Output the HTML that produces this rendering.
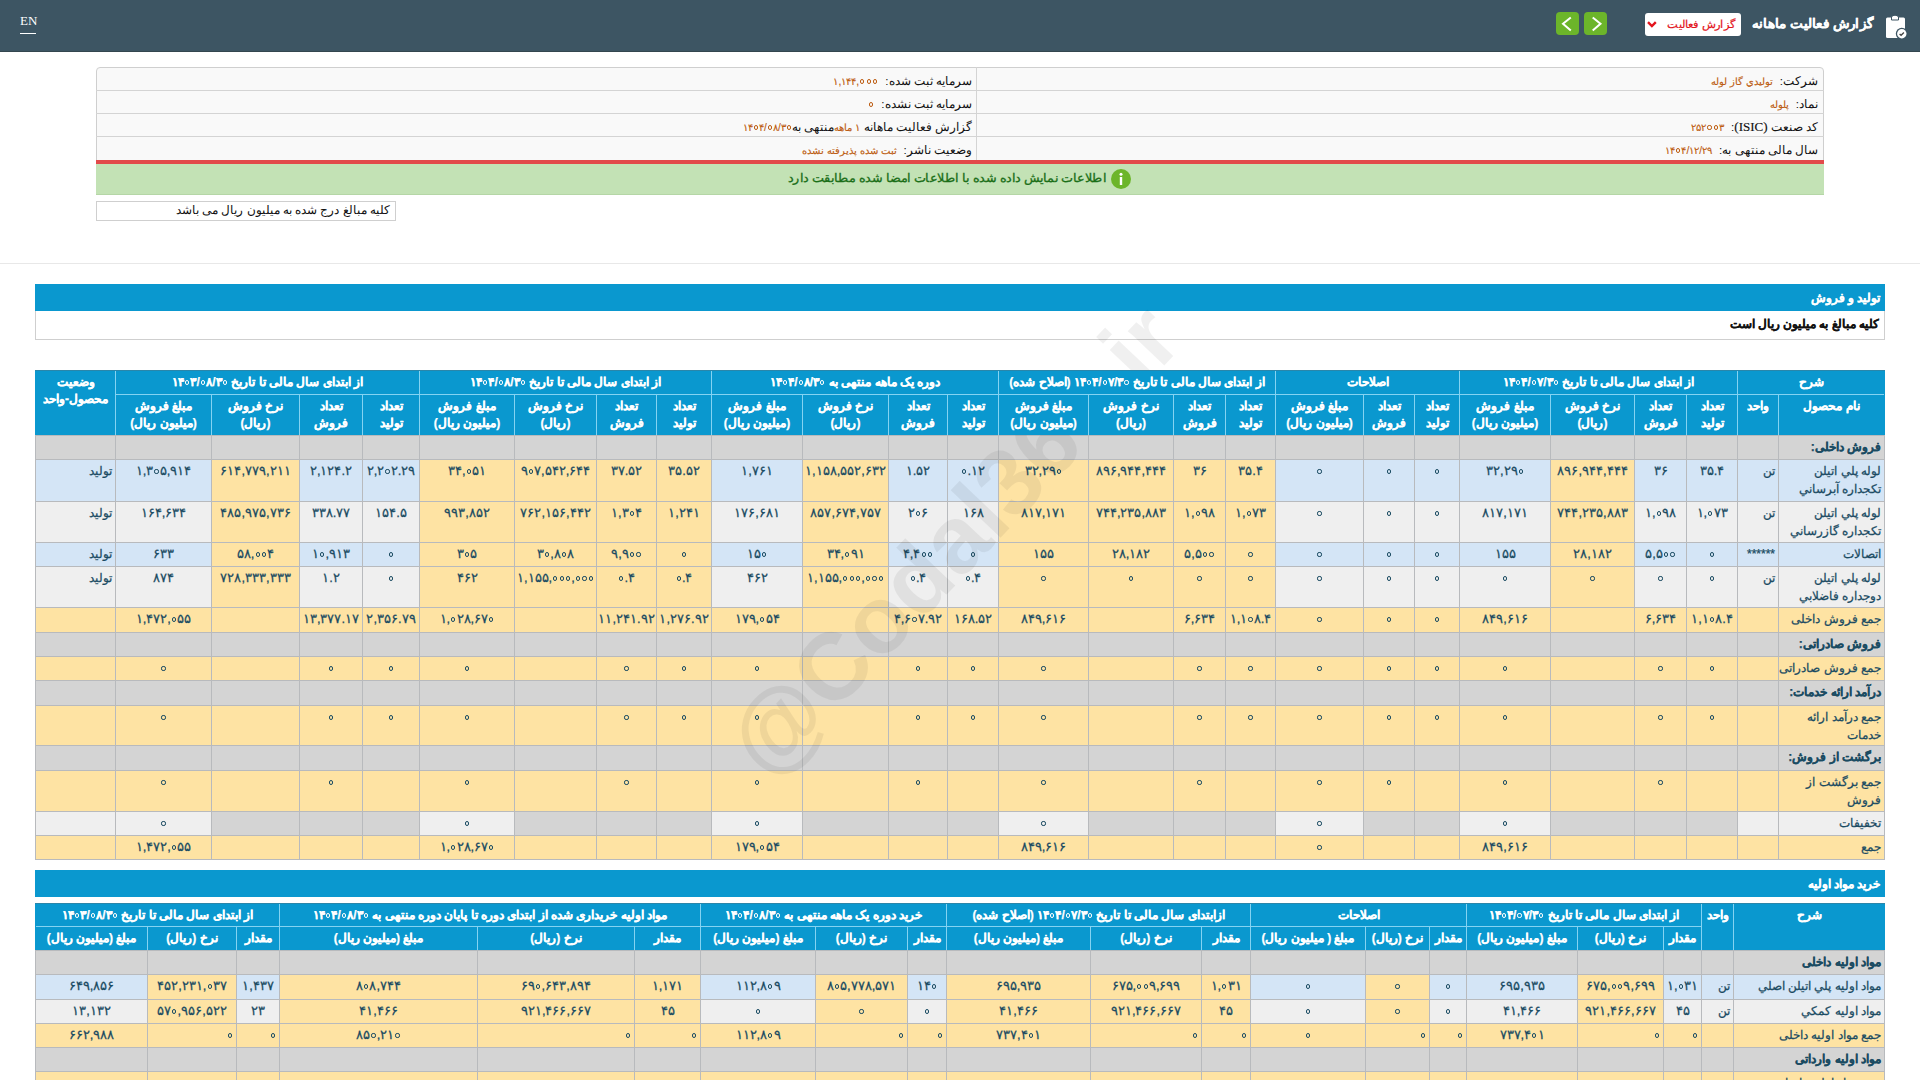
<!DOCTYPE html>
<html lang="fa"><head><meta charset="utf-8">
<style>
html,body{margin:0;padding:0;}
body{width:1920px;height:1080px;overflow:hidden;position:relative;background:#fff;font-family:"Liberation Sans",sans-serif;direction:rtl;}
div{box-sizing:border-box;}
.c{position:absolute;overflow:hidden;}
.c>div{-webkit-text-stroke:0.25px currentColor;}
.a span{-webkit-text-stroke:0.15px currentColor;}
.a{position:absolute;}
.n{direction:ltr;unicode-bidi:isolate;}
.z{display:inline-block;width:4.2px;height:4.2px;border:1.5px solid currentColor;border-radius:50%;vertical-align:1.4px;margin:0 1.1px;box-sizing:border-box;}
</style></head><body>

<div class="a" style="left:0;top:0;width:1920px;height:52px;background:#3d5563;border-bottom:1px solid #34464f;"></div>
<div class="a" style="left:20px;top:13px;font-family:'Liberation Serif',serif;font-size:13px;color:#fff;direction:ltr;line-height:16px;">EN</div>
<div class="a" style="left:20px;top:33px;width:16px;height:1px;background:#fff;"></div>
<svg class="a" style="left:1876px;top:8px;" width="40" height="36" viewBox="0 0 40 36">
  <rect x="10" y="9.5" width="19" height="20.5" rx="1.5" fill="#fff"/>
  <path d="M15.5 12 V9 a4 3.5 0 0 1 7 0 V12 Z" fill="#fff" stroke="#3d5563" stroke-width="1"/>
  <circle cx="25.8" cy="25.7" r="6" fill="#3d5563"/>
  <circle cx="25.8" cy="25.7" r="4.7" fill="#fff"/>
  <path d="M23.6 25.9 l1.5 1.4 l2.8 -2.8" fill="none" stroke="#444" stroke-width="1.3"/>
</svg>
<div class="a" style="right:47px;top:14px;font-size:13px;font-weight:bold;color:#fff;-webkit-text-stroke:0.2px #fff;transform:scaleX(1.043);transform-origin:right center;line-height:20px;white-space:nowrap;">گزارش فعالیت ماهانه</div>
<div class="a" style="left:1645px;top:13px;width:96px;height:23px;background:#fff;border-radius:3px;"></div>
<div class="a" style="right:185px;top:15px;font-size:11px;color:#e3141c;-webkit-text-stroke:0.2px #e3141c;transform:scaleX(1.045);transform-origin:right center;line-height:18px;white-space:nowrap;">گزارش فعالیت</div>
<svg class="a" style="left:1645px;top:13px;" width="20" height="23" viewBox="0 0 20 23"><path d="M3 9.2 L6.9 13 L10.8 9.2" fill="none" stroke="#e3141c" stroke-width="2.4"/></svg>
<div class="a" style="left:1556px;top:12px;width:23px;height:23px;background:#6cb52a;border-radius:4px;"></div>
<div class="a" style="left:1584px;top:12px;width:23px;height:23px;background:#6cb52a;border-radius:4px;"></div>
<svg class="a" style="left:1556px;top:12px;" width="52" height="23" viewBox="0 0 52 23"><path d="M14.8 5.5 L7 11.7 L14.8 18.5" fill="none" stroke="#fff" stroke-width="2"/><path d="M36.7 5.5 L44.5 11.7 L36.7 18.5" fill="none" stroke="#fff" stroke-width="2"/></svg>

<div class="a" style="left:96px;top:67px;width:1728px;height:94px;background:#f9f9f9;border:1px solid #cfcfcf;border-radius:4px 4px 0 0;"></div>
<div class="a" style="left:96px;top:90px;width:1728px;height:1px;background:#d4d4d4;"></div>
<div class="a" style="left:96px;top:113px;width:1728px;height:1px;background:#d4d4d4;"></div>
<div class="a" style="left:96px;top:136px;width:1728px;height:1px;background:#d4d4d4;"></div>
<div class="a" style="left:976px;top:67px;width:1px;height:94px;background:#d4d4d4;"></div>
<div class="a" style="left:96px;top:160px;width:1728px;height:4px;background:#e24a4a;"></div>
<div class="a" style="left:96px;top:164px;width:1728px;height:31px;background:#c3e2b5;border-bottom:1px solid #b5d6a6;"></div>
<svg class="a" style="left:1110px;top:168px;" width="22" height="22" viewBox="0 0 22 22"><circle cx="11" cy="11" r="10" fill="#6cb52a"/><circle cx="11" cy="6.2" r="1.5" fill="#fff"/><rect x="9.8" y="9" width="2.4" height="8" fill="#fff"/></svg>
<div class="a" style="right:814px;top:169px;font-size:12px;transform:scaleX(1.064);transform-origin:right center;font-weight:normal;-webkit-text-stroke:0.3px #1a6e17;color:#1a6e17;line-height:18px;white-space:nowrap;">اطلاعات نمایش داده شده با اطلاعات امضا شده مطابقت دارد</div>
<div class="a" style="left:96px;top:201px;width:300px;height:20px;background:#fff;border:1px solid #cfcfcf;"></div>
<div class="a" style="right:1530px;top:202px;font-size:11.8px;color:#111;line-height:17px;white-space:nowrap;">کلیه مبالغ درج شده به میلیون ریال می باشد</div>
<div class="a" style="left:0;top:263px;width:1920px;height:1px;background:#e8e8e8;"></div>

<div class="a" style="left:35px;top:284px;width:1850px;height:27px;background:#0a98cf;"></div>
<div class="a" style="right:40px;top:289px;font-size:11.6px;font-weight:bold;color:#fff;-webkit-text-stroke:0.25px #fff;line-height:17px;white-space:nowrap;">تولید و فروش</div>
<div class="a" style="left:35px;top:311px;width:1850px;height:29px;background:#fff;border:1px solid #cfcfcf;border-top:0;"></div>
<div class="a" style="right:41px;top:316px;font-size:11.8px;font-weight:bold;color:#111;-webkit-text-stroke:0.2px #111;line-height:17px;white-space:nowrap;">کلیه مبالغ به میلیون ریال است</div>

<div class="a" style="left:35px;top:870px;width:1850px;height:27px;background:#0a98cf;"></div>
<div class="a" style="right:40px;top:875px;font-size:11.6px;font-weight:bold;color:#fff;-webkit-text-stroke:0.25px #fff;line-height:17px;white-space:nowrap;">خرید مواد اولیه</div>
<div class="a" style="right:102px;top:72px;font-size:11.6px;color:#111;line-height:17px;white-space:nowrap;">شرکت:<span style="color:#bd5d12;margin-right:7px;font-size:10.3px">توليدي گاز لوله</span></div>
<div class="a" style="right:102px;top:95px;font-size:11.6px;color:#111;line-height:17px;white-space:nowrap;">نماد:<span style="color:#bd5d12;margin-right:7px;font-size:10.3px">پلوله</span></div>
<div class="a" style="right:102px;top:118px;font-size:11.6px;color:#111;line-height:17px;white-space:nowrap;">کد صنعت <span style="font-family:Liberation Serif,serif;font-size:13px">(ISIC)</span>:<span style="color:#bd5d12;margin-right:7px;font-size:10.3px"><span class="n">۲۵۲<i class="z"></i><i class="z"></i>۳</span></span></div>
<div class="a" style="right:102px;top:141px;font-size:11.6px;color:#111;line-height:17px;white-space:nowrap;">سال مالی منتهی به:<span style="color:#bd5d12;margin-right:7px;font-size:10.3px"><span class="n">۱۴<i class="z"></i>۴/۱۲/۲۹</span></span></div>
<div class="a" style="right:948px;top:72px;font-size:11.6px;color:#111;line-height:17px;white-space:nowrap;">سرمایه ثبت شده:<span style="color:#bd5d12;margin-right:7px;font-size:10.3px"><span class="n">۱,۱۴۴,<i class="z"></i><i class="z"></i><i class="z"></i></span></span></div>
<div class="a" style="right:948px;top:95px;font-size:11.6px;color:#111;line-height:17px;white-space:nowrap;">سرمایه ثبت نشده:<span style="color:#bd5d12;margin-right:7px;font-size:10.3px"><span class="n"><i class="z"></i></span></span></div>
<div class="a" style="right:948px;top:118px;font-size:11.6px;color:#111;line-height:17px;white-space:nowrap;">گزارش فعالیت ماهانه <span style="color:#bd5d12;font-size:10.3px"><span class="n">۱</span> ماهه</span>&zwnj;منتهی به<span style="color:#bd5d12;font-size:10px"><span class="n">۱۴<i class="z"></i>۴/<i class="z"></i>۸/۳<i class="z"></i></span></span></div>
<div class="a" style="right:948px;top:141px;font-size:11.6px;color:#111;line-height:17px;white-space:nowrap;">وضعیت ناشر:<span style="color:#bd5d12;margin-right:7px;font-size:10.3px">ثبت شده پذیرفته نشده</span></div>
<div class="c" style="left:1778px;top:435px;width:107px;height:25px;background:#d4d4d4;border:1px solid #b8babd;"><div style="padding:2px 3px 0 3px;text-align:right;line-height:18px;font-size:12px;color:#1a4b62;font-weight:bold;white-space:nowrap;padding-left:0;">فروش داخلی:</div></div>
<div class="c" style="left:1737px;top:435px;width:42px;height:25px;background:#d4d4d4;border:1px solid #b8babd;"></div>
<div class="c" style="left:1686px;top:435px;width:52px;height:25px;background:#d4d4d4;border:1px solid #b8babd;"></div>
<div class="c" style="left:1634px;top:435px;width:53px;height:25px;background:#d4d4d4;border:1px solid #b8babd;"></div>
<div class="c" style="left:1550px;top:435px;width:85px;height:25px;background:#d4d4d4;border:1px solid #b8babd;"></div>
<div class="c" style="left:1459px;top:435px;width:92px;height:25px;background:#d4d4d4;border:1px solid #b8babd;"></div>
<div class="c" style="left:1414px;top:435px;width:46px;height:25px;background:#d4d4d4;border:1px solid #b8babd;"></div>
<div class="c" style="left:1363px;top:435px;width:52px;height:25px;background:#d4d4d4;border:1px solid #b8babd;"></div>
<div class="c" style="left:1275px;top:435px;width:89px;height:25px;background:#d4d4d4;border:1px solid #b8babd;"></div>
<div class="c" style="left:1225px;top:435px;width:51px;height:25px;background:#d4d4d4;border:1px solid #b8babd;"></div>
<div class="c" style="left:1173px;top:435px;width:53px;height:25px;background:#d4d4d4;border:1px solid #b8babd;"></div>
<div class="c" style="left:1088px;top:435px;width:86px;height:25px;background:#d4d4d4;border:1px solid #b8babd;"></div>
<div class="c" style="left:998px;top:435px;width:91px;height:25px;background:#d4d4d4;border:1px solid #b8babd;"></div>
<div class="c" style="left:947px;top:435px;width:52px;height:25px;background:#d4d4d4;border:1px solid #b8babd;"></div>
<div class="c" style="left:888px;top:435px;width:60px;height:25px;background:#d4d4d4;border:1px solid #b8babd;"></div>
<div class="c" style="left:802px;top:435px;width:87px;height:25px;background:#d4d4d4;border:1px solid #b8babd;"></div>
<div class="c" style="left:711px;top:435px;width:92px;height:25px;background:#d4d4d4;border:1px solid #b8babd;"></div>
<div class="c" style="left:656px;top:435px;width:56px;height:25px;background:#d4d4d4;border:1px solid #b8babd;"></div>
<div class="c" style="left:596px;top:435px;width:61px;height:25px;background:#d4d4d4;border:1px solid #b8babd;"></div>
<div class="c" style="left:514px;top:435px;width:83px;height:25px;background:#d4d4d4;border:1px solid #b8babd;"></div>
<div class="c" style="left:419px;top:435px;width:96px;height:25px;background:#d4d4d4;border:1px solid #b8babd;"></div>
<div class="c" style="left:362px;top:435px;width:58px;height:25px;background:#d4d4d4;border:1px solid #b8babd;"></div>
<div class="c" style="left:299px;top:435px;width:64px;height:25px;background:#d4d4d4;border:1px solid #b8babd;"></div>
<div class="c" style="left:211px;top:435px;width:89px;height:25px;background:#d4d4d4;border:1px solid #b8babd;"></div>
<div class="c" style="left:115px;top:435px;width:97px;height:25px;background:#d4d4d4;border:1px solid #b8babd;"></div>
<div class="c" style="left:35px;top:435px;width:81px;height:25px;background:#d4d4d4;border:1px solid #b8babd;"></div>
<div class="c" style="left:1778px;top:459px;width:107px;height:43px;background:#d4e5f6;border:1px solid #b8babd;"><div style="padding:2px 3px 0 3px;text-align:right;line-height:18px;font-size:12px;color:#1a4b62;white-space:nowrap;padding-left:0;">لوله پلي اتيلن<br>تکجداره آبرساني</div></div>
<div class="c" style="left:1737px;top:459px;width:42px;height:43px;background:#d4e5f6;border:1px solid #b8babd;"><div style="padding:2px 3px 0 3px;text-align:right;line-height:18px;font-size:12px;color:#1a4b62;white-space:nowrap;padding-left:0;">تن</div></div>
<div class="c" style="left:1686px;top:459px;width:52px;height:43px;background:#d4e5f6;border:1px solid #b8babd;"><div style="padding:2px 0px 0 0px;text-align:center;line-height:18px;font-size:13px;color:#1a4b62;white-space:nowrap;"><span class="n">۳۵.۴</span></div></div>
<div class="c" style="left:1634px;top:459px;width:53px;height:43px;background:#d4e5f6;border:1px solid #b8babd;"><div style="padding:2px 0px 0 0px;text-align:center;line-height:18px;font-size:13px;color:#1a4b62;white-space:nowrap;"><span class="n">۳۶</span></div></div>
<div class="c" style="left:1550px;top:459px;width:85px;height:43px;background:#fee3a3;border:1px solid #b8babd;"><div style="padding:2px 0px 0 0px;text-align:center;line-height:18px;font-size:13px;color:#1a4b62;white-space:nowrap;"><span class="n">۸۹۶,۹۴۴,۴۴۴</span></div></div>
<div class="c" style="left:1459px;top:459px;width:92px;height:43px;background:#d4e5f6;border:1px solid #b8babd;"><div style="padding:2px 0px 0 0px;text-align:center;line-height:18px;font-size:13px;color:#1a4b62;white-space:nowrap;"><span class="n">۳۲,۲۹<i class="z"></i></span></div></div>
<div class="c" style="left:1414px;top:459px;width:46px;height:43px;background:#d4e5f6;border:1px solid #b8babd;"><div style="padding:2px 0px 0 0px;text-align:center;line-height:18px;font-size:13px;color:#1a4b62;white-space:nowrap;"><span class="n"><i class="z"></i></span></div></div>
<div class="c" style="left:1363px;top:459px;width:52px;height:43px;background:#d4e5f6;border:1px solid #b8babd;"><div style="padding:2px 0px 0 0px;text-align:center;line-height:18px;font-size:13px;color:#1a4b62;white-space:nowrap;"><span class="n"><i class="z"></i></span></div></div>
<div class="c" style="left:1275px;top:459px;width:89px;height:43px;background:#d4e5f6;border:1px solid #b8babd;"><div style="padding:2px 0px 0 0px;text-align:center;line-height:18px;font-size:13px;color:#1a4b62;white-space:nowrap;"><span class="n"><i class="z"></i></span></div></div>
<div class="c" style="left:1225px;top:459px;width:51px;height:43px;background:#fee3a3;border:1px solid #b8babd;"><div style="padding:2px 0px 0 0px;text-align:center;line-height:18px;font-size:13px;color:#1a4b62;white-space:nowrap;"><span class="n">۳۵.۴</span></div></div>
<div class="c" style="left:1173px;top:459px;width:53px;height:43px;background:#fee3a3;border:1px solid #b8babd;"><div style="padding:2px 0px 0 0px;text-align:center;line-height:18px;font-size:13px;color:#1a4b62;white-space:nowrap;"><span class="n">۳۶</span></div></div>
<div class="c" style="left:1088px;top:459px;width:86px;height:43px;background:#fee3a3;border:1px solid #b8babd;"><div style="padding:2px 0px 0 0px;text-align:center;line-height:18px;font-size:13px;color:#1a4b62;white-space:nowrap;"><span class="n">۸۹۶,۹۴۴,۴۴۴</span></div></div>
<div class="c" style="left:998px;top:459px;width:91px;height:43px;background:#fee3a3;border:1px solid #b8babd;"><div style="padding:2px 0px 0 0px;text-align:center;line-height:18px;font-size:13px;color:#1a4b62;white-space:nowrap;"><span class="n">۳۲,۲۹<i class="z"></i></span></div></div>
<div class="c" style="left:947px;top:459px;width:52px;height:43px;background:#d4e5f6;border:1px solid #b8babd;"><div style="padding:2px 0px 0 0px;text-align:center;line-height:18px;font-size:13px;color:#1a4b62;white-space:nowrap;"><span class="n"><i class="z"></i>.۱۲</span></div></div>
<div class="c" style="left:888px;top:459px;width:60px;height:43px;background:#d4e5f6;border:1px solid #b8babd;"><div style="padding:2px 0px 0 0px;text-align:center;line-height:18px;font-size:13px;color:#1a4b62;white-space:nowrap;"><span class="n">۱.۵۲</span></div></div>
<div class="c" style="left:802px;top:459px;width:87px;height:43px;background:#fee3a3;border:1px solid #b8babd;"><div style="padding:2px 0px 0 0px;text-align:center;line-height:18px;font-size:13px;color:#1a4b62;white-space:nowrap;"><span class="n">۱,۱۵۸,۵۵۲,۶۳۲</span></div></div>
<div class="c" style="left:711px;top:459px;width:92px;height:43px;background:#d4e5f6;border:1px solid #b8babd;"><div style="padding:2px 0px 0 0px;text-align:center;line-height:18px;font-size:13px;color:#1a4b62;white-space:nowrap;"><span class="n">۱,۷۶۱</span></div></div>
<div class="c" style="left:656px;top:459px;width:56px;height:43px;background:#fee3a3;border:1px solid #b8babd;"><div style="padding:2px 0px 0 0px;text-align:center;line-height:18px;font-size:13px;color:#1a4b62;white-space:nowrap;"><span class="n">۳۵.۵۲</span></div></div>
<div class="c" style="left:596px;top:459px;width:61px;height:43px;background:#fee3a3;border:1px solid #b8babd;"><div style="padding:2px 0px 0 0px;text-align:center;line-height:18px;font-size:13px;color:#1a4b62;white-space:nowrap;"><span class="n">۳۷.۵۲</span></div></div>
<div class="c" style="left:514px;top:459px;width:83px;height:43px;background:#fee3a3;border:1px solid #b8babd;"><div style="padding:2px 0px 0 0px;text-align:center;line-height:18px;font-size:13px;color:#1a4b62;white-space:nowrap;"><span class="n">۹<i class="z"></i>۷,۵۴۲,۶۴۴</span></div></div>
<div class="c" style="left:419px;top:459px;width:96px;height:43px;background:#fee3a3;border:1px solid #b8babd;"><div style="padding:2px 0px 0 0px;text-align:center;line-height:18px;font-size:13px;color:#1a4b62;white-space:nowrap;"><span class="n">۳۴,<i class="z"></i>۵۱</span></div></div>
<div class="c" style="left:362px;top:459px;width:58px;height:43px;background:#d4e5f6;border:1px solid #b8babd;"><div style="padding:2px 0px 0 0px;text-align:center;line-height:18px;font-size:13px;color:#1a4b62;white-space:nowrap;"><span class="n">۲,۲<i class="z"></i>۲.۲۹</span></div></div>
<div class="c" style="left:299px;top:459px;width:64px;height:43px;background:#d4e5f6;border:1px solid #b8babd;"><div style="padding:2px 0px 0 0px;text-align:center;line-height:18px;font-size:13px;color:#1a4b62;white-space:nowrap;"><span class="n">۲,۱۲۴.۲</span></div></div>
<div class="c" style="left:211px;top:459px;width:89px;height:43px;background:#fee3a3;border:1px solid #b8babd;"><div style="padding:2px 0px 0 0px;text-align:center;line-height:18px;font-size:13px;color:#1a4b62;white-space:nowrap;"><span class="n">۶۱۴,۷۷۹,۲۱۱</span></div></div>
<div class="c" style="left:115px;top:459px;width:97px;height:43px;background:#d4e5f6;border:1px solid #b8babd;"><div style="padding:2px 0px 0 0px;text-align:center;line-height:18px;font-size:13px;color:#1a4b62;white-space:nowrap;"><span class="n">۱,۳<i class="z"></i>۵,۹۱۴</span></div></div>
<div class="c" style="left:35px;top:459px;width:81px;height:43px;background:#d4e5f6;border:1px solid #b8babd;"><div style="padding:2px 3px 0 3px;text-align:right;line-height:18px;font-size:12px;color:#1a4b62;white-space:nowrap;padding-left:0;">تولید</div></div>
<div class="c" style="left:1778px;top:501px;width:107px;height:42px;background:#efefef;border:1px solid #b8babd;"><div style="padding:2px 3px 0 3px;text-align:right;line-height:18px;font-size:12px;color:#1a4b62;white-space:nowrap;padding-left:0;">لوله پلي اتيلن<br>تکجداره گازرساني</div></div>
<div class="c" style="left:1737px;top:501px;width:42px;height:42px;background:#efefef;border:1px solid #b8babd;"><div style="padding:2px 3px 0 3px;text-align:right;line-height:18px;font-size:12px;color:#1a4b62;white-space:nowrap;padding-left:0;">تن</div></div>
<div class="c" style="left:1686px;top:501px;width:52px;height:42px;background:#efefef;border:1px solid #b8babd;"><div style="padding:2px 0px 0 0px;text-align:center;line-height:18px;font-size:13px;color:#1a4b62;white-space:nowrap;"><span class="n">۱,<i class="z"></i>۷۳</span></div></div>
<div class="c" style="left:1634px;top:501px;width:53px;height:42px;background:#efefef;border:1px solid #b8babd;"><div style="padding:2px 0px 0 0px;text-align:center;line-height:18px;font-size:13px;color:#1a4b62;white-space:nowrap;"><span class="n">۱,<i class="z"></i>۹۸</span></div></div>
<div class="c" style="left:1550px;top:501px;width:85px;height:42px;background:#fee3a3;border:1px solid #b8babd;"><div style="padding:2px 0px 0 0px;text-align:center;line-height:18px;font-size:13px;color:#1a4b62;white-space:nowrap;"><span class="n">۷۴۴,۲۳۵,۸۸۳</span></div></div>
<div class="c" style="left:1459px;top:501px;width:92px;height:42px;background:#efefef;border:1px solid #b8babd;"><div style="padding:2px 0px 0 0px;text-align:center;line-height:18px;font-size:13px;color:#1a4b62;white-space:nowrap;"><span class="n">۸۱۷,۱۷۱</span></div></div>
<div class="c" style="left:1414px;top:501px;width:46px;height:42px;background:#efefef;border:1px solid #b8babd;"><div style="padding:2px 0px 0 0px;text-align:center;line-height:18px;font-size:13px;color:#1a4b62;white-space:nowrap;"><span class="n"><i class="z"></i></span></div></div>
<div class="c" style="left:1363px;top:501px;width:52px;height:42px;background:#efefef;border:1px solid #b8babd;"><div style="padding:2px 0px 0 0px;text-align:center;line-height:18px;font-size:13px;color:#1a4b62;white-space:nowrap;"><span class="n"><i class="z"></i></span></div></div>
<div class="c" style="left:1275px;top:501px;width:89px;height:42px;background:#efefef;border:1px solid #b8babd;"><div style="padding:2px 0px 0 0px;text-align:center;line-height:18px;font-size:13px;color:#1a4b62;white-space:nowrap;"><span class="n"><i class="z"></i></span></div></div>
<div class="c" style="left:1225px;top:501px;width:51px;height:42px;background:#fee3a3;border:1px solid #b8babd;"><div style="padding:2px 0px 0 0px;text-align:center;line-height:18px;font-size:13px;color:#1a4b62;white-space:nowrap;"><span class="n">۱,<i class="z"></i>۷۳</span></div></div>
<div class="c" style="left:1173px;top:501px;width:53px;height:42px;background:#fee3a3;border:1px solid #b8babd;"><div style="padding:2px 0px 0 0px;text-align:center;line-height:18px;font-size:13px;color:#1a4b62;white-space:nowrap;"><span class="n">۱,<i class="z"></i>۹۸</span></div></div>
<div class="c" style="left:1088px;top:501px;width:86px;height:42px;background:#fee3a3;border:1px solid #b8babd;"><div style="padding:2px 0px 0 0px;text-align:center;line-height:18px;font-size:13px;color:#1a4b62;white-space:nowrap;"><span class="n">۷۴۴,۲۳۵,۸۸۳</span></div></div>
<div class="c" style="left:998px;top:501px;width:91px;height:42px;background:#fee3a3;border:1px solid #b8babd;"><div style="padding:2px 0px 0 0px;text-align:center;line-height:18px;font-size:13px;color:#1a4b62;white-space:nowrap;"><span class="n">۸۱۷,۱۷۱</span></div></div>
<div class="c" style="left:947px;top:501px;width:52px;height:42px;background:#efefef;border:1px solid #b8babd;"><div style="padding:2px 0px 0 0px;text-align:center;line-height:18px;font-size:13px;color:#1a4b62;white-space:nowrap;"><span class="n">۱۶۸</span></div></div>
<div class="c" style="left:888px;top:501px;width:60px;height:42px;background:#efefef;border:1px solid #b8babd;"><div style="padding:2px 0px 0 0px;text-align:center;line-height:18px;font-size:13px;color:#1a4b62;white-space:nowrap;"><span class="n">۲<i class="z"></i>۶</span></div></div>
<div class="c" style="left:802px;top:501px;width:87px;height:42px;background:#fee3a3;border:1px solid #b8babd;"><div style="padding:2px 0px 0 0px;text-align:center;line-height:18px;font-size:13px;color:#1a4b62;white-space:nowrap;"><span class="n">۸۵۷,۶۷۴,۷۵۷</span></div></div>
<div class="c" style="left:711px;top:501px;width:92px;height:42px;background:#efefef;border:1px solid #b8babd;"><div style="padding:2px 0px 0 0px;text-align:center;line-height:18px;font-size:13px;color:#1a4b62;white-space:nowrap;"><span class="n">۱۷۶,۶۸۱</span></div></div>
<div class="c" style="left:656px;top:501px;width:56px;height:42px;background:#fee3a3;border:1px solid #b8babd;"><div style="padding:2px 0px 0 0px;text-align:center;line-height:18px;font-size:13px;color:#1a4b62;white-space:nowrap;"><span class="n">۱,۲۴۱</span></div></div>
<div class="c" style="left:596px;top:501px;width:61px;height:42px;background:#fee3a3;border:1px solid #b8babd;"><div style="padding:2px 0px 0 0px;text-align:center;line-height:18px;font-size:13px;color:#1a4b62;white-space:nowrap;"><span class="n">۱,۳<i class="z"></i>۴</span></div></div>
<div class="c" style="left:514px;top:501px;width:83px;height:42px;background:#fee3a3;border:1px solid #b8babd;"><div style="padding:2px 0px 0 0px;text-align:center;line-height:18px;font-size:13px;color:#1a4b62;white-space:nowrap;"><span class="n">۷۶۲,۱۵۶,۴۴۲</span></div></div>
<div class="c" style="left:419px;top:501px;width:96px;height:42px;background:#fee3a3;border:1px solid #b8babd;"><div style="padding:2px 0px 0 0px;text-align:center;line-height:18px;font-size:13px;color:#1a4b62;white-space:nowrap;"><span class="n">۹۹۳,۸۵۲</span></div></div>
<div class="c" style="left:362px;top:501px;width:58px;height:42px;background:#efefef;border:1px solid #b8babd;"><div style="padding:2px 0px 0 0px;text-align:center;line-height:18px;font-size:13px;color:#1a4b62;white-space:nowrap;"><span class="n">۱۵۴.۵</span></div></div>
<div class="c" style="left:299px;top:501px;width:64px;height:42px;background:#efefef;border:1px solid #b8babd;"><div style="padding:2px 0px 0 0px;text-align:center;line-height:18px;font-size:13px;color:#1a4b62;white-space:nowrap;"><span class="n">۳۳۸.۷۷</span></div></div>
<div class="c" style="left:211px;top:501px;width:89px;height:42px;background:#fee3a3;border:1px solid #b8babd;"><div style="padding:2px 0px 0 0px;text-align:center;line-height:18px;font-size:13px;color:#1a4b62;white-space:nowrap;"><span class="n">۴۸۵,۹۷۵,۷۳۶</span></div></div>
<div class="c" style="left:115px;top:501px;width:97px;height:42px;background:#efefef;border:1px solid #b8babd;"><div style="padding:2px 0px 0 0px;text-align:center;line-height:18px;font-size:13px;color:#1a4b62;white-space:nowrap;"><span class="n">۱۶۴,۶۳۴</span></div></div>
<div class="c" style="left:35px;top:501px;width:81px;height:42px;background:#efefef;border:1px solid #b8babd;"><div style="padding:2px 3px 0 3px;text-align:right;line-height:18px;font-size:12px;color:#1a4b62;white-space:nowrap;padding-left:0;">تولید</div></div>
<div class="c" style="left:1778px;top:542px;width:107px;height:25px;background:#d4e5f6;border:1px solid #b8babd;"><div style="padding:2px 3px 0 3px;text-align:right;line-height:18px;font-size:12px;color:#1a4b62;white-space:nowrap;padding-left:0;">اتصالات</div></div>
<div class="c" style="left:1737px;top:542px;width:42px;height:25px;background:#d4e5f6;border:1px solid #b8babd;"><div style="padding:2px 3px 0 3px;text-align:right;line-height:18px;font-size:12px;color:#1a4b62;white-space:nowrap;padding-left:0;">******</div></div>
<div class="c" style="left:1686px;top:542px;width:52px;height:25px;background:#d4e5f6;border:1px solid #b8babd;"><div style="padding:2px 0px 0 0px;text-align:center;line-height:18px;font-size:13px;color:#1a4b62;white-space:nowrap;"><span class="n"><i class="z"></i></span></div></div>
<div class="c" style="left:1634px;top:542px;width:53px;height:25px;background:#d4e5f6;border:1px solid #b8babd;"><div style="padding:2px 0px 0 0px;text-align:center;line-height:18px;font-size:13px;color:#1a4b62;white-space:nowrap;"><span class="n">۵,۵<i class="z"></i><i class="z"></i></span></div></div>
<div class="c" style="left:1550px;top:542px;width:85px;height:25px;background:#fee3a3;border:1px solid #b8babd;"><div style="padding:2px 0px 0 0px;text-align:center;line-height:18px;font-size:13px;color:#1a4b62;white-space:nowrap;"><span class="n">۲۸,۱۸۲</span></div></div>
<div class="c" style="left:1459px;top:542px;width:92px;height:25px;background:#d4e5f6;border:1px solid #b8babd;"><div style="padding:2px 0px 0 0px;text-align:center;line-height:18px;font-size:13px;color:#1a4b62;white-space:nowrap;"><span class="n">۱۵۵</span></div></div>
<div class="c" style="left:1414px;top:542px;width:46px;height:25px;background:#d4e5f6;border:1px solid #b8babd;"><div style="padding:2px 0px 0 0px;text-align:center;line-height:18px;font-size:13px;color:#1a4b62;white-space:nowrap;"><span class="n"><i class="z"></i></span></div></div>
<div class="c" style="left:1363px;top:542px;width:52px;height:25px;background:#d4e5f6;border:1px solid #b8babd;"><div style="padding:2px 0px 0 0px;text-align:center;line-height:18px;font-size:13px;color:#1a4b62;white-space:nowrap;"><span class="n"><i class="z"></i></span></div></div>
<div class="c" style="left:1275px;top:542px;width:89px;height:25px;background:#d4e5f6;border:1px solid #b8babd;"><div style="padding:2px 0px 0 0px;text-align:center;line-height:18px;font-size:13px;color:#1a4b62;white-space:nowrap;"><span class="n"><i class="z"></i></span></div></div>
<div class="c" style="left:1225px;top:542px;width:51px;height:25px;background:#fee3a3;border:1px solid #b8babd;"><div style="padding:2px 0px 0 0px;text-align:center;line-height:18px;font-size:13px;color:#1a4b62;white-space:nowrap;"><span class="n"><i class="z"></i></span></div></div>
<div class="c" style="left:1173px;top:542px;width:53px;height:25px;background:#fee3a3;border:1px solid #b8babd;"><div style="padding:2px 0px 0 0px;text-align:center;line-height:18px;font-size:13px;color:#1a4b62;white-space:nowrap;"><span class="n">۵,۵<i class="z"></i><i class="z"></i></span></div></div>
<div class="c" style="left:1088px;top:542px;width:86px;height:25px;background:#fee3a3;border:1px solid #b8babd;"><div style="padding:2px 0px 0 0px;text-align:center;line-height:18px;font-size:13px;color:#1a4b62;white-space:nowrap;"><span class="n">۲۸,۱۸۲</span></div></div>
<div class="c" style="left:998px;top:542px;width:91px;height:25px;background:#fee3a3;border:1px solid #b8babd;"><div style="padding:2px 0px 0 0px;text-align:center;line-height:18px;font-size:13px;color:#1a4b62;white-space:nowrap;"><span class="n">۱۵۵</span></div></div>
<div class="c" style="left:947px;top:542px;width:52px;height:25px;background:#d4e5f6;border:1px solid #b8babd;"><div style="padding:2px 0px 0 0px;text-align:center;line-height:18px;font-size:13px;color:#1a4b62;white-space:nowrap;"><span class="n"><i class="z"></i></span></div></div>
<div class="c" style="left:888px;top:542px;width:60px;height:25px;background:#d4e5f6;border:1px solid #b8babd;"><div style="padding:2px 0px 0 0px;text-align:center;line-height:18px;font-size:13px;color:#1a4b62;white-space:nowrap;"><span class="n">۴,۴<i class="z"></i><i class="z"></i></span></div></div>
<div class="c" style="left:802px;top:542px;width:87px;height:25px;background:#fee3a3;border:1px solid #b8babd;"><div style="padding:2px 0px 0 0px;text-align:center;line-height:18px;font-size:13px;color:#1a4b62;white-space:nowrap;"><span class="n">۳۴,<i class="z"></i>۹۱</span></div></div>
<div class="c" style="left:711px;top:542px;width:92px;height:25px;background:#d4e5f6;border:1px solid #b8babd;"><div style="padding:2px 0px 0 0px;text-align:center;line-height:18px;font-size:13px;color:#1a4b62;white-space:nowrap;"><span class="n">۱۵<i class="z"></i></span></div></div>
<div class="c" style="left:656px;top:542px;width:56px;height:25px;background:#fee3a3;border:1px solid #b8babd;"><div style="padding:2px 0px 0 0px;text-align:center;line-height:18px;font-size:13px;color:#1a4b62;white-space:nowrap;"><span class="n"><i class="z"></i></span></div></div>
<div class="c" style="left:596px;top:542px;width:61px;height:25px;background:#fee3a3;border:1px solid #b8babd;"><div style="padding:2px 0px 0 0px;text-align:center;line-height:18px;font-size:13px;color:#1a4b62;white-space:nowrap;"><span class="n">۹,۹<i class="z"></i><i class="z"></i></span></div></div>
<div class="c" style="left:514px;top:542px;width:83px;height:25px;background:#fee3a3;border:1px solid #b8babd;"><div style="padding:2px 0px 0 0px;text-align:center;line-height:18px;font-size:13px;color:#1a4b62;white-space:nowrap;"><span class="n">۳<i class="z"></i>,۸<i class="z"></i>۸</span></div></div>
<div class="c" style="left:419px;top:542px;width:96px;height:25px;background:#fee3a3;border:1px solid #b8babd;"><div style="padding:2px 0px 0 0px;text-align:center;line-height:18px;font-size:13px;color:#1a4b62;white-space:nowrap;"><span class="n">۳<i class="z"></i>۵</span></div></div>
<div class="c" style="left:362px;top:542px;width:58px;height:25px;background:#d4e5f6;border:1px solid #b8babd;"><div style="padding:2px 0px 0 0px;text-align:center;line-height:18px;font-size:13px;color:#1a4b62;white-space:nowrap;"><span class="n"><i class="z"></i></span></div></div>
<div class="c" style="left:299px;top:542px;width:64px;height:25px;background:#d4e5f6;border:1px solid #b8babd;"><div style="padding:2px 0px 0 0px;text-align:center;line-height:18px;font-size:13px;color:#1a4b62;white-space:nowrap;"><span class="n">۱<i class="z"></i>,۹۱۳</span></div></div>
<div class="c" style="left:211px;top:542px;width:89px;height:25px;background:#fee3a3;border:1px solid #b8babd;"><div style="padding:2px 0px 0 0px;text-align:center;line-height:18px;font-size:13px;color:#1a4b62;white-space:nowrap;"><span class="n">۵۸,<i class="z"></i><i class="z"></i>۴</span></div></div>
<div class="c" style="left:115px;top:542px;width:97px;height:25px;background:#d4e5f6;border:1px solid #b8babd;"><div style="padding:2px 0px 0 0px;text-align:center;line-height:18px;font-size:13px;color:#1a4b62;white-space:nowrap;"><span class="n">۶۳۳</span></div></div>
<div class="c" style="left:35px;top:542px;width:81px;height:25px;background:#d4e5f6;border:1px solid #b8babd;"><div style="padding:2px 3px 0 3px;text-align:right;line-height:18px;font-size:12px;color:#1a4b62;white-space:nowrap;padding-left:0;">تولید</div></div>
<div class="c" style="left:1778px;top:566px;width:107px;height:42px;background:#efefef;border:1px solid #b8babd;"><div style="padding:2px 3px 0 3px;text-align:right;line-height:18px;font-size:12px;color:#1a4b62;white-space:nowrap;padding-left:0;">لوله پلي اتيلن<br>دوجداره فاضلابي</div></div>
<div class="c" style="left:1737px;top:566px;width:42px;height:42px;background:#efefef;border:1px solid #b8babd;"><div style="padding:2px 3px 0 3px;text-align:right;line-height:18px;font-size:12px;color:#1a4b62;white-space:nowrap;padding-left:0;">تن</div></div>
<div class="c" style="left:1686px;top:566px;width:52px;height:42px;background:#efefef;border:1px solid #b8babd;"><div style="padding:2px 0px 0 0px;text-align:center;line-height:18px;font-size:13px;color:#1a4b62;white-space:nowrap;"><span class="n"><i class="z"></i></span></div></div>
<div class="c" style="left:1634px;top:566px;width:53px;height:42px;background:#efefef;border:1px solid #b8babd;"><div style="padding:2px 0px 0 0px;text-align:center;line-height:18px;font-size:13px;color:#1a4b62;white-space:nowrap;"><span class="n"><i class="z"></i></span></div></div>
<div class="c" style="left:1550px;top:566px;width:85px;height:42px;background:#fee3a3;border:1px solid #b8babd;"><div style="padding:2px 0px 0 0px;text-align:center;line-height:18px;font-size:13px;color:#1a4b62;white-space:nowrap;"><span class="n"><i class="z"></i></span></div></div>
<div class="c" style="left:1459px;top:566px;width:92px;height:42px;background:#efefef;border:1px solid #b8babd;"><div style="padding:2px 0px 0 0px;text-align:center;line-height:18px;font-size:13px;color:#1a4b62;white-space:nowrap;"><span class="n"><i class="z"></i></span></div></div>
<div class="c" style="left:1414px;top:566px;width:46px;height:42px;background:#efefef;border:1px solid #b8babd;"><div style="padding:2px 0px 0 0px;text-align:center;line-height:18px;font-size:13px;color:#1a4b62;white-space:nowrap;"><span class="n"><i class="z"></i></span></div></div>
<div class="c" style="left:1363px;top:566px;width:52px;height:42px;background:#efefef;border:1px solid #b8babd;"><div style="padding:2px 0px 0 0px;text-align:center;line-height:18px;font-size:13px;color:#1a4b62;white-space:nowrap;"><span class="n"><i class="z"></i></span></div></div>
<div class="c" style="left:1275px;top:566px;width:89px;height:42px;background:#efefef;border:1px solid #b8babd;"><div style="padding:2px 0px 0 0px;text-align:center;line-height:18px;font-size:13px;color:#1a4b62;white-space:nowrap;"><span class="n"><i class="z"></i></span></div></div>
<div class="c" style="left:1225px;top:566px;width:51px;height:42px;background:#fee3a3;border:1px solid #b8babd;"><div style="padding:2px 0px 0 0px;text-align:center;line-height:18px;font-size:13px;color:#1a4b62;white-space:nowrap;"><span class="n"><i class="z"></i></span></div></div>
<div class="c" style="left:1173px;top:566px;width:53px;height:42px;background:#fee3a3;border:1px solid #b8babd;"><div style="padding:2px 0px 0 0px;text-align:center;line-height:18px;font-size:13px;color:#1a4b62;white-space:nowrap;"><span class="n"><i class="z"></i></span></div></div>
<div class="c" style="left:1088px;top:566px;width:86px;height:42px;background:#fee3a3;border:1px solid #b8babd;"><div style="padding:2px 0px 0 0px;text-align:center;line-height:18px;font-size:13px;color:#1a4b62;white-space:nowrap;"><span class="n"><i class="z"></i></span></div></div>
<div class="c" style="left:998px;top:566px;width:91px;height:42px;background:#fee3a3;border:1px solid #b8babd;"><div style="padding:2px 0px 0 0px;text-align:center;line-height:18px;font-size:13px;color:#1a4b62;white-space:nowrap;"><span class="n"><i class="z"></i></span></div></div>
<div class="c" style="left:947px;top:566px;width:52px;height:42px;background:#efefef;border:1px solid #b8babd;"><div style="padding:2px 0px 0 0px;text-align:center;line-height:18px;font-size:13px;color:#1a4b62;white-space:nowrap;"><span class="n"><i class="z"></i>.۴</span></div></div>
<div class="c" style="left:888px;top:566px;width:60px;height:42px;background:#efefef;border:1px solid #b8babd;"><div style="padding:2px 0px 0 0px;text-align:center;line-height:18px;font-size:13px;color:#1a4b62;white-space:nowrap;"><span class="n"><i class="z"></i>.۴</span></div></div>
<div class="c" style="left:802px;top:566px;width:87px;height:42px;background:#fee3a3;border:1px solid #b8babd;"><div style="padding:2px 0px 0 0px;text-align:center;line-height:18px;font-size:13px;color:#1a4b62;white-space:nowrap;"><span class="n">۱,۱۵۵,<i class="z"></i><i class="z"></i><i class="z"></i>,<i class="z"></i><i class="z"></i><i class="z"></i></span></div></div>
<div class="c" style="left:711px;top:566px;width:92px;height:42px;background:#efefef;border:1px solid #b8babd;"><div style="padding:2px 0px 0 0px;text-align:center;line-height:18px;font-size:13px;color:#1a4b62;white-space:nowrap;"><span class="n">۴۶۲</span></div></div>
<div class="c" style="left:656px;top:566px;width:56px;height:42px;background:#fee3a3;border:1px solid #b8babd;"><div style="padding:2px 0px 0 0px;text-align:center;line-height:18px;font-size:13px;color:#1a4b62;white-space:nowrap;"><span class="n"><i class="z"></i>.۴</span></div></div>
<div class="c" style="left:596px;top:566px;width:61px;height:42px;background:#fee3a3;border:1px solid #b8babd;"><div style="padding:2px 0px 0 0px;text-align:center;line-height:18px;font-size:13px;color:#1a4b62;white-space:nowrap;"><span class="n"><i class="z"></i>.۴</span></div></div>
<div class="c" style="left:514px;top:566px;width:83px;height:42px;background:#fee3a3;border:1px solid #b8babd;"><div style="padding:2px 0px 0 0px;text-align:center;line-height:18px;font-size:13px;color:#1a4b62;white-space:nowrap;"><span class="n">۱,۱۵۵,<i class="z"></i><i class="z"></i><i class="z"></i>,<i class="z"></i><i class="z"></i><i class="z"></i></span></div></div>
<div class="c" style="left:419px;top:566px;width:96px;height:42px;background:#fee3a3;border:1px solid #b8babd;"><div style="padding:2px 0px 0 0px;text-align:center;line-height:18px;font-size:13px;color:#1a4b62;white-space:nowrap;"><span class="n">۴۶۲</span></div></div>
<div class="c" style="left:362px;top:566px;width:58px;height:42px;background:#efefef;border:1px solid #b8babd;"><div style="padding:2px 0px 0 0px;text-align:center;line-height:18px;font-size:13px;color:#1a4b62;white-space:nowrap;"><span class="n"><i class="z"></i></span></div></div>
<div class="c" style="left:299px;top:566px;width:64px;height:42px;background:#efefef;border:1px solid #b8babd;"><div style="padding:2px 0px 0 0px;text-align:center;line-height:18px;font-size:13px;color:#1a4b62;white-space:nowrap;"><span class="n">۱.۲</span></div></div>
<div class="c" style="left:211px;top:566px;width:89px;height:42px;background:#fee3a3;border:1px solid #b8babd;"><div style="padding:2px 0px 0 0px;text-align:center;line-height:18px;font-size:13px;color:#1a4b62;white-space:nowrap;"><span class="n">۷۲۸,۳۳۳,۳۳۳</span></div></div>
<div class="c" style="left:115px;top:566px;width:97px;height:42px;background:#efefef;border:1px solid #b8babd;"><div style="padding:2px 0px 0 0px;text-align:center;line-height:18px;font-size:13px;color:#1a4b62;white-space:nowrap;"><span class="n">۸۷۴</span></div></div>
<div class="c" style="left:35px;top:566px;width:81px;height:42px;background:#efefef;border:1px solid #b8babd;"><div style="padding:2px 3px 0 3px;text-align:right;line-height:18px;font-size:12px;color:#1a4b62;white-space:nowrap;padding-left:0;">تولید</div></div>
<div class="c" style="left:1778px;top:607px;width:107px;height:26px;background:#fee3a3;border:1px solid #b8babd;"><div style="padding:2px 3px 0 3px;text-align:right;line-height:18px;font-size:12px;color:#1a4b62;white-space:nowrap;padding-left:0;">جمع فروش داخلی</div></div>
<div class="c" style="left:1737px;top:607px;width:42px;height:26px;background:#fee3a3;border:1px solid #b8babd;"></div>
<div class="c" style="left:1686px;top:607px;width:52px;height:26px;background:#fee3a3;border:1px solid #b8babd;"><div style="padding:2px 0px 0 0px;text-align:center;line-height:18px;font-size:13px;color:#1a4b62;white-space:nowrap;"><span class="n">۱,۱<i class="z"></i>۸.۴</span></div></div>
<div class="c" style="left:1634px;top:607px;width:53px;height:26px;background:#fee3a3;border:1px solid #b8babd;"><div style="padding:2px 0px 0 0px;text-align:center;line-height:18px;font-size:13px;color:#1a4b62;white-space:nowrap;"><span class="n">۶,۶۳۴</span></div></div>
<div class="c" style="left:1550px;top:607px;width:85px;height:26px;background:#fee3a3;border:1px solid #b8babd;"></div>
<div class="c" style="left:1459px;top:607px;width:92px;height:26px;background:#fee3a3;border:1px solid #b8babd;"><div style="padding:2px 0px 0 0px;text-align:center;line-height:18px;font-size:13px;color:#1a4b62;white-space:nowrap;"><span class="n">۸۴۹,۶۱۶</span></div></div>
<div class="c" style="left:1414px;top:607px;width:46px;height:26px;background:#fee3a3;border:1px solid #b8babd;"><div style="padding:2px 0px 0 0px;text-align:center;line-height:18px;font-size:13px;color:#1a4b62;white-space:nowrap;"><span class="n"><i class="z"></i></span></div></div>
<div class="c" style="left:1363px;top:607px;width:52px;height:26px;background:#fee3a3;border:1px solid #b8babd;"><div style="padding:2px 0px 0 0px;text-align:center;line-height:18px;font-size:13px;color:#1a4b62;white-space:nowrap;"><span class="n"><i class="z"></i></span></div></div>
<div class="c" style="left:1275px;top:607px;width:89px;height:26px;background:#fee3a3;border:1px solid #b8babd;"><div style="padding:2px 0px 0 0px;text-align:center;line-height:18px;font-size:13px;color:#1a4b62;white-space:nowrap;"><span class="n"><i class="z"></i></span></div></div>
<div class="c" style="left:1225px;top:607px;width:51px;height:26px;background:#fee3a3;border:1px solid #b8babd;"><div style="padding:2px 0px 0 0px;text-align:center;line-height:18px;font-size:13px;color:#1a4b62;white-space:nowrap;"><span class="n">۱,۱<i class="z"></i>۸.۴</span></div></div>
<div class="c" style="left:1173px;top:607px;width:53px;height:26px;background:#fee3a3;border:1px solid #b8babd;"><div style="padding:2px 0px 0 0px;text-align:center;line-height:18px;font-size:13px;color:#1a4b62;white-space:nowrap;"><span class="n">۶,۶۳۴</span></div></div>
<div class="c" style="left:1088px;top:607px;width:86px;height:26px;background:#fee3a3;border:1px solid #b8babd;"></div>
<div class="c" style="left:998px;top:607px;width:91px;height:26px;background:#fee3a3;border:1px solid #b8babd;"><div style="padding:2px 0px 0 0px;text-align:center;line-height:18px;font-size:13px;color:#1a4b62;white-space:nowrap;"><span class="n">۸۴۹,۶۱۶</span></div></div>
<div class="c" style="left:947px;top:607px;width:52px;height:26px;background:#fee3a3;border:1px solid #b8babd;"><div style="padding:2px 0px 0 0px;text-align:center;line-height:18px;font-size:13px;color:#1a4b62;white-space:nowrap;"><span class="n">۱۶۸.۵۲</span></div></div>
<div class="c" style="left:888px;top:607px;width:60px;height:26px;background:#fee3a3;border:1px solid #b8babd;"><div style="padding:2px 0px 0 0px;text-align:center;line-height:18px;font-size:13px;color:#1a4b62;white-space:nowrap;"><span class="n">۴,۶<i class="z"></i>۷.۹۲</span></div></div>
<div class="c" style="left:802px;top:607px;width:87px;height:26px;background:#fee3a3;border:1px solid #b8babd;"></div>
<div class="c" style="left:711px;top:607px;width:92px;height:26px;background:#fee3a3;border:1px solid #b8babd;"><div style="padding:2px 0px 0 0px;text-align:center;line-height:18px;font-size:13px;color:#1a4b62;white-space:nowrap;"><span class="n">۱۷۹,<i class="z"></i>۵۴</span></div></div>
<div class="c" style="left:656px;top:607px;width:56px;height:26px;background:#fee3a3;border:1px solid #b8babd;"><div style="padding:2px 0px 0 0px;text-align:center;line-height:18px;font-size:13px;color:#1a4b62;white-space:nowrap;"><span class="n">۱,۲۷۶.۹۲</span></div></div>
<div class="c" style="left:596px;top:607px;width:61px;height:26px;background:#fee3a3;border:1px solid #b8babd;"><div style="padding:2px 0px 0 0px;text-align:center;line-height:18px;font-size:13px;color:#1a4b62;white-space:nowrap;"><span class="n">۱۱,۲۴۱.۹۲</span></div></div>
<div class="c" style="left:514px;top:607px;width:83px;height:26px;background:#fee3a3;border:1px solid #b8babd;"></div>
<div class="c" style="left:419px;top:607px;width:96px;height:26px;background:#fee3a3;border:1px solid #b8babd;"><div style="padding:2px 0px 0 0px;text-align:center;line-height:18px;font-size:13px;color:#1a4b62;white-space:nowrap;"><span class="n">۱,<i class="z"></i>۲۸,۶۷<i class="z"></i></span></div></div>
<div class="c" style="left:362px;top:607px;width:58px;height:26px;background:#fee3a3;border:1px solid #b8babd;"><div style="padding:2px 0px 0 0px;text-align:center;line-height:18px;font-size:13px;color:#1a4b62;white-space:nowrap;"><span class="n">۲,۳۵۶.۷۹</span></div></div>
<div class="c" style="left:299px;top:607px;width:64px;height:26px;background:#fee3a3;border:1px solid #b8babd;"><div style="padding:2px 0px 0 0px;text-align:center;line-height:18px;font-size:13px;color:#1a4b62;white-space:nowrap;"><span class="n">۱۳,۳۷۷.۱۷</span></div></div>
<div class="c" style="left:211px;top:607px;width:89px;height:26px;background:#fee3a3;border:1px solid #b8babd;"></div>
<div class="c" style="left:115px;top:607px;width:97px;height:26px;background:#fee3a3;border:1px solid #b8babd;"><div style="padding:2px 0px 0 0px;text-align:center;line-height:18px;font-size:13px;color:#1a4b62;white-space:nowrap;"><span class="n">۱,۴۷۲,<i class="z"></i>۵۵</span></div></div>
<div class="c" style="left:35px;top:607px;width:81px;height:26px;background:#fee3a3;border:1px solid #b8babd;"></div>
<div class="c" style="left:1778px;top:632px;width:107px;height:25px;background:#d4d4d4;border:1px solid #b8babd;"><div style="padding:2px 3px 0 3px;text-align:right;line-height:18px;font-size:12px;color:#1a4b62;font-weight:bold;white-space:nowrap;padding-left:0;">فروش صادراتی:</div></div>
<div class="c" style="left:1737px;top:632px;width:42px;height:25px;background:#d4d4d4;border:1px solid #b8babd;"></div>
<div class="c" style="left:1686px;top:632px;width:52px;height:25px;background:#d4d4d4;border:1px solid #b8babd;"></div>
<div class="c" style="left:1634px;top:632px;width:53px;height:25px;background:#d4d4d4;border:1px solid #b8babd;"></div>
<div class="c" style="left:1550px;top:632px;width:85px;height:25px;background:#d4d4d4;border:1px solid #b8babd;"></div>
<div class="c" style="left:1459px;top:632px;width:92px;height:25px;background:#d4d4d4;border:1px solid #b8babd;"></div>
<div class="c" style="left:1414px;top:632px;width:46px;height:25px;background:#d4d4d4;border:1px solid #b8babd;"></div>
<div class="c" style="left:1363px;top:632px;width:52px;height:25px;background:#d4d4d4;border:1px solid #b8babd;"></div>
<div class="c" style="left:1275px;top:632px;width:89px;height:25px;background:#d4d4d4;border:1px solid #b8babd;"></div>
<div class="c" style="left:1225px;top:632px;width:51px;height:25px;background:#d4d4d4;border:1px solid #b8babd;"></div>
<div class="c" style="left:1173px;top:632px;width:53px;height:25px;background:#d4d4d4;border:1px solid #b8babd;"></div>
<div class="c" style="left:1088px;top:632px;width:86px;height:25px;background:#d4d4d4;border:1px solid #b8babd;"></div>
<div class="c" style="left:998px;top:632px;width:91px;height:25px;background:#d4d4d4;border:1px solid #b8babd;"></div>
<div class="c" style="left:947px;top:632px;width:52px;height:25px;background:#d4d4d4;border:1px solid #b8babd;"></div>
<div class="c" style="left:888px;top:632px;width:60px;height:25px;background:#d4d4d4;border:1px solid #b8babd;"></div>
<div class="c" style="left:802px;top:632px;width:87px;height:25px;background:#d4d4d4;border:1px solid #b8babd;"></div>
<div class="c" style="left:711px;top:632px;width:92px;height:25px;background:#d4d4d4;border:1px solid #b8babd;"></div>
<div class="c" style="left:656px;top:632px;width:56px;height:25px;background:#d4d4d4;border:1px solid #b8babd;"></div>
<div class="c" style="left:596px;top:632px;width:61px;height:25px;background:#d4d4d4;border:1px solid #b8babd;"></div>
<div class="c" style="left:514px;top:632px;width:83px;height:25px;background:#d4d4d4;border:1px solid #b8babd;"></div>
<div class="c" style="left:419px;top:632px;width:96px;height:25px;background:#d4d4d4;border:1px solid #b8babd;"></div>
<div class="c" style="left:362px;top:632px;width:58px;height:25px;background:#d4d4d4;border:1px solid #b8babd;"></div>
<div class="c" style="left:299px;top:632px;width:64px;height:25px;background:#d4d4d4;border:1px solid #b8babd;"></div>
<div class="c" style="left:211px;top:632px;width:89px;height:25px;background:#d4d4d4;border:1px solid #b8babd;"></div>
<div class="c" style="left:115px;top:632px;width:97px;height:25px;background:#d4d4d4;border:1px solid #b8babd;"></div>
<div class="c" style="left:35px;top:632px;width:81px;height:25px;background:#d4d4d4;border:1px solid #b8babd;"></div>
<div class="c" style="left:1778px;top:656px;width:107px;height:25px;background:#fee3a3;border:1px solid #b8babd;"><div style="padding:2px 3px 0 3px;text-align:right;line-height:18px;font-size:12px;color:#1a4b62;white-space:nowrap;padding-left:0;">جمع فروش صادراتی</div></div>
<div class="c" style="left:1737px;top:656px;width:42px;height:25px;background:#fee3a3;border:1px solid #b8babd;"></div>
<div class="c" style="left:1686px;top:656px;width:52px;height:25px;background:#fee3a3;border:1px solid #b8babd;"><div style="padding:2px 0px 0 0px;text-align:center;line-height:18px;font-size:13px;color:#1a4b62;white-space:nowrap;"><span class="n"><i class="z"></i></span></div></div>
<div class="c" style="left:1634px;top:656px;width:53px;height:25px;background:#fee3a3;border:1px solid #b8babd;"><div style="padding:2px 0px 0 0px;text-align:center;line-height:18px;font-size:13px;color:#1a4b62;white-space:nowrap;"><span class="n"><i class="z"></i></span></div></div>
<div class="c" style="left:1550px;top:656px;width:85px;height:25px;background:#fee3a3;border:1px solid #b8babd;"></div>
<div class="c" style="left:1459px;top:656px;width:92px;height:25px;background:#fee3a3;border:1px solid #b8babd;"><div style="padding:2px 0px 0 0px;text-align:center;line-height:18px;font-size:13px;color:#1a4b62;white-space:nowrap;"><span class="n"><i class="z"></i></span></div></div>
<div class="c" style="left:1414px;top:656px;width:46px;height:25px;background:#fee3a3;border:1px solid #b8babd;"><div style="padding:2px 0px 0 0px;text-align:center;line-height:18px;font-size:13px;color:#1a4b62;white-space:nowrap;"><span class="n"><i class="z"></i></span></div></div>
<div class="c" style="left:1363px;top:656px;width:52px;height:25px;background:#fee3a3;border:1px solid #b8babd;"><div style="padding:2px 0px 0 0px;text-align:center;line-height:18px;font-size:13px;color:#1a4b62;white-space:nowrap;"><span class="n"><i class="z"></i></span></div></div>
<div class="c" style="left:1275px;top:656px;width:89px;height:25px;background:#fee3a3;border:1px solid #b8babd;"><div style="padding:2px 0px 0 0px;text-align:center;line-height:18px;font-size:13px;color:#1a4b62;white-space:nowrap;"><span class="n"><i class="z"></i></span></div></div>
<div class="c" style="left:1225px;top:656px;width:51px;height:25px;background:#fee3a3;border:1px solid #b8babd;"><div style="padding:2px 0px 0 0px;text-align:center;line-height:18px;font-size:13px;color:#1a4b62;white-space:nowrap;"><span class="n"><i class="z"></i></span></div></div>
<div class="c" style="left:1173px;top:656px;width:53px;height:25px;background:#fee3a3;border:1px solid #b8babd;"><div style="padding:2px 0px 0 0px;text-align:center;line-height:18px;font-size:13px;color:#1a4b62;white-space:nowrap;"><span class="n"><i class="z"></i></span></div></div>
<div class="c" style="left:1088px;top:656px;width:86px;height:25px;background:#fee3a3;border:1px solid #b8babd;"></div>
<div class="c" style="left:998px;top:656px;width:91px;height:25px;background:#fee3a3;border:1px solid #b8babd;"><div style="padding:2px 0px 0 0px;text-align:center;line-height:18px;font-size:13px;color:#1a4b62;white-space:nowrap;"><span class="n"><i class="z"></i></span></div></div>
<div class="c" style="left:947px;top:656px;width:52px;height:25px;background:#fee3a3;border:1px solid #b8babd;"><div style="padding:2px 0px 0 0px;text-align:center;line-height:18px;font-size:13px;color:#1a4b62;white-space:nowrap;"><span class="n"><i class="z"></i></span></div></div>
<div class="c" style="left:888px;top:656px;width:60px;height:25px;background:#fee3a3;border:1px solid #b8babd;"><div style="padding:2px 0px 0 0px;text-align:center;line-height:18px;font-size:13px;color:#1a4b62;white-space:nowrap;"><span class="n"><i class="z"></i></span></div></div>
<div class="c" style="left:802px;top:656px;width:87px;height:25px;background:#fee3a3;border:1px solid #b8babd;"></div>
<div class="c" style="left:711px;top:656px;width:92px;height:25px;background:#fee3a3;border:1px solid #b8babd;"><div style="padding:2px 0px 0 0px;text-align:center;line-height:18px;font-size:13px;color:#1a4b62;white-space:nowrap;"><span class="n"><i class="z"></i></span></div></div>
<div class="c" style="left:656px;top:656px;width:56px;height:25px;background:#fee3a3;border:1px solid #b8babd;"><div style="padding:2px 0px 0 0px;text-align:center;line-height:18px;font-size:13px;color:#1a4b62;white-space:nowrap;"><span class="n"><i class="z"></i></span></div></div>
<div class="c" style="left:596px;top:656px;width:61px;height:25px;background:#fee3a3;border:1px solid #b8babd;"><div style="padding:2px 0px 0 0px;text-align:center;line-height:18px;font-size:13px;color:#1a4b62;white-space:nowrap;"><span class="n"><i class="z"></i></span></div></div>
<div class="c" style="left:514px;top:656px;width:83px;height:25px;background:#fee3a3;border:1px solid #b8babd;"></div>
<div class="c" style="left:419px;top:656px;width:96px;height:25px;background:#fee3a3;border:1px solid #b8babd;"><div style="padding:2px 0px 0 0px;text-align:center;line-height:18px;font-size:13px;color:#1a4b62;white-space:nowrap;"><span class="n"><i class="z"></i></span></div></div>
<div class="c" style="left:362px;top:656px;width:58px;height:25px;background:#fee3a3;border:1px solid #b8babd;"><div style="padding:2px 0px 0 0px;text-align:center;line-height:18px;font-size:13px;color:#1a4b62;white-space:nowrap;"><span class="n"><i class="z"></i></span></div></div>
<div class="c" style="left:299px;top:656px;width:64px;height:25px;background:#fee3a3;border:1px solid #b8babd;"><div style="padding:2px 0px 0 0px;text-align:center;line-height:18px;font-size:13px;color:#1a4b62;white-space:nowrap;"><span class="n"><i class="z"></i></span></div></div>
<div class="c" style="left:211px;top:656px;width:89px;height:25px;background:#fee3a3;border:1px solid #b8babd;"></div>
<div class="c" style="left:115px;top:656px;width:97px;height:25px;background:#fee3a3;border:1px solid #b8babd;"><div style="padding:2px 0px 0 0px;text-align:center;line-height:18px;font-size:13px;color:#1a4b62;white-space:nowrap;"><span class="n"><i class="z"></i></span></div></div>
<div class="c" style="left:35px;top:656px;width:81px;height:25px;background:#fee3a3;border:1px solid #b8babd;"></div>
<div class="c" style="left:1778px;top:680px;width:107px;height:26px;background:#d4d4d4;border:1px solid #b8babd;"><div style="padding:2px 3px 0 3px;text-align:right;line-height:18px;font-size:12px;color:#1a4b62;font-weight:bold;white-space:nowrap;padding-left:0;">درآمد ارائه خدمات:</div></div>
<div class="c" style="left:1737px;top:680px;width:42px;height:26px;background:#d4d4d4;border:1px solid #b8babd;"></div>
<div class="c" style="left:1686px;top:680px;width:52px;height:26px;background:#d4d4d4;border:1px solid #b8babd;"></div>
<div class="c" style="left:1634px;top:680px;width:53px;height:26px;background:#d4d4d4;border:1px solid #b8babd;"></div>
<div class="c" style="left:1550px;top:680px;width:85px;height:26px;background:#d4d4d4;border:1px solid #b8babd;"></div>
<div class="c" style="left:1459px;top:680px;width:92px;height:26px;background:#d4d4d4;border:1px solid #b8babd;"></div>
<div class="c" style="left:1414px;top:680px;width:46px;height:26px;background:#d4d4d4;border:1px solid #b8babd;"></div>
<div class="c" style="left:1363px;top:680px;width:52px;height:26px;background:#d4d4d4;border:1px solid #b8babd;"></div>
<div class="c" style="left:1275px;top:680px;width:89px;height:26px;background:#d4d4d4;border:1px solid #b8babd;"></div>
<div class="c" style="left:1225px;top:680px;width:51px;height:26px;background:#d4d4d4;border:1px solid #b8babd;"></div>
<div class="c" style="left:1173px;top:680px;width:53px;height:26px;background:#d4d4d4;border:1px solid #b8babd;"></div>
<div class="c" style="left:1088px;top:680px;width:86px;height:26px;background:#d4d4d4;border:1px solid #b8babd;"></div>
<div class="c" style="left:998px;top:680px;width:91px;height:26px;background:#d4d4d4;border:1px solid #b8babd;"></div>
<div class="c" style="left:947px;top:680px;width:52px;height:26px;background:#d4d4d4;border:1px solid #b8babd;"></div>
<div class="c" style="left:888px;top:680px;width:60px;height:26px;background:#d4d4d4;border:1px solid #b8babd;"></div>
<div class="c" style="left:802px;top:680px;width:87px;height:26px;background:#d4d4d4;border:1px solid #b8babd;"></div>
<div class="c" style="left:711px;top:680px;width:92px;height:26px;background:#d4d4d4;border:1px solid #b8babd;"></div>
<div class="c" style="left:656px;top:680px;width:56px;height:26px;background:#d4d4d4;border:1px solid #b8babd;"></div>
<div class="c" style="left:596px;top:680px;width:61px;height:26px;background:#d4d4d4;border:1px solid #b8babd;"></div>
<div class="c" style="left:514px;top:680px;width:83px;height:26px;background:#d4d4d4;border:1px solid #b8babd;"></div>
<div class="c" style="left:419px;top:680px;width:96px;height:26px;background:#d4d4d4;border:1px solid #b8babd;"></div>
<div class="c" style="left:362px;top:680px;width:58px;height:26px;background:#d4d4d4;border:1px solid #b8babd;"></div>
<div class="c" style="left:299px;top:680px;width:64px;height:26px;background:#d4d4d4;border:1px solid #b8babd;"></div>
<div class="c" style="left:211px;top:680px;width:89px;height:26px;background:#d4d4d4;border:1px solid #b8babd;"></div>
<div class="c" style="left:115px;top:680px;width:97px;height:26px;background:#d4d4d4;border:1px solid #b8babd;"></div>
<div class="c" style="left:35px;top:680px;width:81px;height:26px;background:#d4d4d4;border:1px solid #b8babd;"></div>
<div class="c" style="left:1778px;top:705px;width:107px;height:41px;background:#fee3a3;border:1px solid #b8babd;"><div style="padding:2px 3px 0 3px;text-align:right;line-height:18px;font-size:12px;color:#1a4b62;white-space:nowrap;padding-left:0;">جمع درآمد ارائه<br>خدمات</div></div>
<div class="c" style="left:1737px;top:705px;width:42px;height:41px;background:#fee3a3;border:1px solid #b8babd;"></div>
<div class="c" style="left:1686px;top:705px;width:52px;height:41px;background:#fee3a3;border:1px solid #b8babd;"><div style="padding:2px 0px 0 0px;text-align:center;line-height:18px;font-size:13px;color:#1a4b62;white-space:nowrap;"><span class="n"><i class="z"></i></span></div></div>
<div class="c" style="left:1634px;top:705px;width:53px;height:41px;background:#fee3a3;border:1px solid #b8babd;"><div style="padding:2px 0px 0 0px;text-align:center;line-height:18px;font-size:13px;color:#1a4b62;white-space:nowrap;"><span class="n"><i class="z"></i></span></div></div>
<div class="c" style="left:1550px;top:705px;width:85px;height:41px;background:#fee3a3;border:1px solid #b8babd;"></div>
<div class="c" style="left:1459px;top:705px;width:92px;height:41px;background:#fee3a3;border:1px solid #b8babd;"><div style="padding:2px 0px 0 0px;text-align:center;line-height:18px;font-size:13px;color:#1a4b62;white-space:nowrap;"><span class="n"><i class="z"></i></span></div></div>
<div class="c" style="left:1414px;top:705px;width:46px;height:41px;background:#fee3a3;border:1px solid #b8babd;"><div style="padding:2px 0px 0 0px;text-align:center;line-height:18px;font-size:13px;color:#1a4b62;white-space:nowrap;"><span class="n"><i class="z"></i></span></div></div>
<div class="c" style="left:1363px;top:705px;width:52px;height:41px;background:#fee3a3;border:1px solid #b8babd;"><div style="padding:2px 0px 0 0px;text-align:center;line-height:18px;font-size:13px;color:#1a4b62;white-space:nowrap;"><span class="n"><i class="z"></i></span></div></div>
<div class="c" style="left:1275px;top:705px;width:89px;height:41px;background:#fee3a3;border:1px solid #b8babd;"><div style="padding:2px 0px 0 0px;text-align:center;line-height:18px;font-size:13px;color:#1a4b62;white-space:nowrap;"><span class="n"><i class="z"></i></span></div></div>
<div class="c" style="left:1225px;top:705px;width:51px;height:41px;background:#fee3a3;border:1px solid #b8babd;"><div style="padding:2px 0px 0 0px;text-align:center;line-height:18px;font-size:13px;color:#1a4b62;white-space:nowrap;"><span class="n"><i class="z"></i></span></div></div>
<div class="c" style="left:1173px;top:705px;width:53px;height:41px;background:#fee3a3;border:1px solid #b8babd;"><div style="padding:2px 0px 0 0px;text-align:center;line-height:18px;font-size:13px;color:#1a4b62;white-space:nowrap;"><span class="n"><i class="z"></i></span></div></div>
<div class="c" style="left:1088px;top:705px;width:86px;height:41px;background:#fee3a3;border:1px solid #b8babd;"></div>
<div class="c" style="left:998px;top:705px;width:91px;height:41px;background:#fee3a3;border:1px solid #b8babd;"><div style="padding:2px 0px 0 0px;text-align:center;line-height:18px;font-size:13px;color:#1a4b62;white-space:nowrap;"><span class="n"><i class="z"></i></span></div></div>
<div class="c" style="left:947px;top:705px;width:52px;height:41px;background:#fee3a3;border:1px solid #b8babd;"><div style="padding:2px 0px 0 0px;text-align:center;line-height:18px;font-size:13px;color:#1a4b62;white-space:nowrap;"><span class="n"><i class="z"></i></span></div></div>
<div class="c" style="left:888px;top:705px;width:60px;height:41px;background:#fee3a3;border:1px solid #b8babd;"><div style="padding:2px 0px 0 0px;text-align:center;line-height:18px;font-size:13px;color:#1a4b62;white-space:nowrap;"><span class="n"><i class="z"></i></span></div></div>
<div class="c" style="left:802px;top:705px;width:87px;height:41px;background:#fee3a3;border:1px solid #b8babd;"></div>
<div class="c" style="left:711px;top:705px;width:92px;height:41px;background:#fee3a3;border:1px solid #b8babd;"><div style="padding:2px 0px 0 0px;text-align:center;line-height:18px;font-size:13px;color:#1a4b62;white-space:nowrap;"><span class="n"><i class="z"></i></span></div></div>
<div class="c" style="left:656px;top:705px;width:56px;height:41px;background:#fee3a3;border:1px solid #b8babd;"><div style="padding:2px 0px 0 0px;text-align:center;line-height:18px;font-size:13px;color:#1a4b62;white-space:nowrap;"><span class="n"><i class="z"></i></span></div></div>
<div class="c" style="left:596px;top:705px;width:61px;height:41px;background:#fee3a3;border:1px solid #b8babd;"><div style="padding:2px 0px 0 0px;text-align:center;line-height:18px;font-size:13px;color:#1a4b62;white-space:nowrap;"><span class="n"><i class="z"></i></span></div></div>
<div class="c" style="left:514px;top:705px;width:83px;height:41px;background:#fee3a3;border:1px solid #b8babd;"></div>
<div class="c" style="left:419px;top:705px;width:96px;height:41px;background:#fee3a3;border:1px solid #b8babd;"><div style="padding:2px 0px 0 0px;text-align:center;line-height:18px;font-size:13px;color:#1a4b62;white-space:nowrap;"><span class="n"><i class="z"></i></span></div></div>
<div class="c" style="left:362px;top:705px;width:58px;height:41px;background:#fee3a3;border:1px solid #b8babd;"><div style="padding:2px 0px 0 0px;text-align:center;line-height:18px;font-size:13px;color:#1a4b62;white-space:nowrap;"><span class="n"><i class="z"></i></span></div></div>
<div class="c" style="left:299px;top:705px;width:64px;height:41px;background:#fee3a3;border:1px solid #b8babd;"><div style="padding:2px 0px 0 0px;text-align:center;line-height:18px;font-size:13px;color:#1a4b62;white-space:nowrap;"><span class="n"><i class="z"></i></span></div></div>
<div class="c" style="left:211px;top:705px;width:89px;height:41px;background:#fee3a3;border:1px solid #b8babd;"></div>
<div class="c" style="left:115px;top:705px;width:97px;height:41px;background:#fee3a3;border:1px solid #b8babd;"><div style="padding:2px 0px 0 0px;text-align:center;line-height:18px;font-size:13px;color:#1a4b62;white-space:nowrap;"><span class="n"><i class="z"></i></span></div></div>
<div class="c" style="left:35px;top:705px;width:81px;height:41px;background:#fee3a3;border:1px solid #b8babd;"></div>
<div class="c" style="left:1778px;top:745px;width:107px;height:26px;background:#d4d4d4;border:1px solid #b8babd;"><div style="padding:2px 3px 0 3px;text-align:right;line-height:18px;font-size:12px;color:#1a4b62;font-weight:bold;white-space:nowrap;padding-left:0;">برگشت از فروش:</div></div>
<div class="c" style="left:1737px;top:745px;width:42px;height:26px;background:#d4d4d4;border:1px solid #b8babd;"></div>
<div class="c" style="left:1686px;top:745px;width:52px;height:26px;background:#d4d4d4;border:1px solid #b8babd;"></div>
<div class="c" style="left:1634px;top:745px;width:53px;height:26px;background:#d4d4d4;border:1px solid #b8babd;"></div>
<div class="c" style="left:1550px;top:745px;width:85px;height:26px;background:#d4d4d4;border:1px solid #b8babd;"></div>
<div class="c" style="left:1459px;top:745px;width:92px;height:26px;background:#d4d4d4;border:1px solid #b8babd;"></div>
<div class="c" style="left:1414px;top:745px;width:46px;height:26px;background:#d4d4d4;border:1px solid #b8babd;"></div>
<div class="c" style="left:1363px;top:745px;width:52px;height:26px;background:#d4d4d4;border:1px solid #b8babd;"></div>
<div class="c" style="left:1275px;top:745px;width:89px;height:26px;background:#d4d4d4;border:1px solid #b8babd;"></div>
<div class="c" style="left:1225px;top:745px;width:51px;height:26px;background:#d4d4d4;border:1px solid #b8babd;"></div>
<div class="c" style="left:1173px;top:745px;width:53px;height:26px;background:#d4d4d4;border:1px solid #b8babd;"></div>
<div class="c" style="left:1088px;top:745px;width:86px;height:26px;background:#d4d4d4;border:1px solid #b8babd;"></div>
<div class="c" style="left:998px;top:745px;width:91px;height:26px;background:#d4d4d4;border:1px solid #b8babd;"></div>
<div class="c" style="left:947px;top:745px;width:52px;height:26px;background:#d4d4d4;border:1px solid #b8babd;"></div>
<div class="c" style="left:888px;top:745px;width:60px;height:26px;background:#d4d4d4;border:1px solid #b8babd;"></div>
<div class="c" style="left:802px;top:745px;width:87px;height:26px;background:#d4d4d4;border:1px solid #b8babd;"></div>
<div class="c" style="left:711px;top:745px;width:92px;height:26px;background:#d4d4d4;border:1px solid #b8babd;"></div>
<div class="c" style="left:656px;top:745px;width:56px;height:26px;background:#d4d4d4;border:1px solid #b8babd;"></div>
<div class="c" style="left:596px;top:745px;width:61px;height:26px;background:#d4d4d4;border:1px solid #b8babd;"></div>
<div class="c" style="left:514px;top:745px;width:83px;height:26px;background:#d4d4d4;border:1px solid #b8babd;"></div>
<div class="c" style="left:419px;top:745px;width:96px;height:26px;background:#d4d4d4;border:1px solid #b8babd;"></div>
<div class="c" style="left:362px;top:745px;width:58px;height:26px;background:#d4d4d4;border:1px solid #b8babd;"></div>
<div class="c" style="left:299px;top:745px;width:64px;height:26px;background:#d4d4d4;border:1px solid #b8babd;"></div>
<div class="c" style="left:211px;top:745px;width:89px;height:26px;background:#d4d4d4;border:1px solid #b8babd;"></div>
<div class="c" style="left:115px;top:745px;width:97px;height:26px;background:#d4d4d4;border:1px solid #b8babd;"></div>
<div class="c" style="left:35px;top:745px;width:81px;height:26px;background:#d4d4d4;border:1px solid #b8babd;"></div>
<div class="c" style="left:1778px;top:770px;width:107px;height:42px;background:#fee3a3;border:1px solid #b8babd;"><div style="padding:2px 3px 0 3px;text-align:right;line-height:18px;font-size:12px;color:#1a4b62;white-space:nowrap;padding-left:0;">جمع برگشت از<br>فروش</div></div>
<div class="c" style="left:1737px;top:770px;width:42px;height:42px;background:#fee3a3;border:1px solid #b8babd;"></div>
<div class="c" style="left:1686px;top:770px;width:52px;height:42px;background:#fee3a3;border:1px solid #b8babd;"></div>
<div class="c" style="left:1634px;top:770px;width:53px;height:42px;background:#fee3a3;border:1px solid #b8babd;"><div style="padding:2px 0px 0 0px;text-align:center;line-height:18px;font-size:13px;color:#1a4b62;white-space:nowrap;"><span class="n"><i class="z"></i></span></div></div>
<div class="c" style="left:1550px;top:770px;width:85px;height:42px;background:#fee3a3;border:1px solid #b8babd;"></div>
<div class="c" style="left:1459px;top:770px;width:92px;height:42px;background:#fee3a3;border:1px solid #b8babd;"><div style="padding:2px 0px 0 0px;text-align:center;line-height:18px;font-size:13px;color:#1a4b62;white-space:nowrap;"><span class="n"><i class="z"></i></span></div></div>
<div class="c" style="left:1414px;top:770px;width:46px;height:42px;background:#fee3a3;border:1px solid #b8babd;"></div>
<div class="c" style="left:1363px;top:770px;width:52px;height:42px;background:#fee3a3;border:1px solid #b8babd;"><div style="padding:2px 0px 0 0px;text-align:center;line-height:18px;font-size:13px;color:#1a4b62;white-space:nowrap;"><span class="n"><i class="z"></i></span></div></div>
<div class="c" style="left:1275px;top:770px;width:89px;height:42px;background:#fee3a3;border:1px solid #b8babd;"><div style="padding:2px 0px 0 0px;text-align:center;line-height:18px;font-size:13px;color:#1a4b62;white-space:nowrap;"><span class="n"><i class="z"></i></span></div></div>
<div class="c" style="left:1225px;top:770px;width:51px;height:42px;background:#fee3a3;border:1px solid #b8babd;"></div>
<div class="c" style="left:1173px;top:770px;width:53px;height:42px;background:#fee3a3;border:1px solid #b8babd;"><div style="padding:2px 0px 0 0px;text-align:center;line-height:18px;font-size:13px;color:#1a4b62;white-space:nowrap;"><span class="n"><i class="z"></i></span></div></div>
<div class="c" style="left:1088px;top:770px;width:86px;height:42px;background:#fee3a3;border:1px solid #b8babd;"></div>
<div class="c" style="left:998px;top:770px;width:91px;height:42px;background:#fee3a3;border:1px solid #b8babd;"><div style="padding:2px 0px 0 0px;text-align:center;line-height:18px;font-size:13px;color:#1a4b62;white-space:nowrap;"><span class="n"><i class="z"></i></span></div></div>
<div class="c" style="left:947px;top:770px;width:52px;height:42px;background:#fee3a3;border:1px solid #b8babd;"></div>
<div class="c" style="left:888px;top:770px;width:60px;height:42px;background:#fee3a3;border:1px solid #b8babd;"><div style="padding:2px 0px 0 0px;text-align:center;line-height:18px;font-size:13px;color:#1a4b62;white-space:nowrap;"><span class="n"><i class="z"></i></span></div></div>
<div class="c" style="left:802px;top:770px;width:87px;height:42px;background:#fee3a3;border:1px solid #b8babd;"></div>
<div class="c" style="left:711px;top:770px;width:92px;height:42px;background:#fee3a3;border:1px solid #b8babd;"><div style="padding:2px 0px 0 0px;text-align:center;line-height:18px;font-size:13px;color:#1a4b62;white-space:nowrap;"><span class="n"><i class="z"></i></span></div></div>
<div class="c" style="left:656px;top:770px;width:56px;height:42px;background:#fee3a3;border:1px solid #b8babd;"></div>
<div class="c" style="left:596px;top:770px;width:61px;height:42px;background:#fee3a3;border:1px solid #b8babd;"><div style="padding:2px 0px 0 0px;text-align:center;line-height:18px;font-size:13px;color:#1a4b62;white-space:nowrap;"><span class="n"><i class="z"></i></span></div></div>
<div class="c" style="left:514px;top:770px;width:83px;height:42px;background:#fee3a3;border:1px solid #b8babd;"></div>
<div class="c" style="left:419px;top:770px;width:96px;height:42px;background:#fee3a3;border:1px solid #b8babd;"><div style="padding:2px 0px 0 0px;text-align:center;line-height:18px;font-size:13px;color:#1a4b62;white-space:nowrap;"><span class="n"><i class="z"></i></span></div></div>
<div class="c" style="left:362px;top:770px;width:58px;height:42px;background:#fee3a3;border:1px solid #b8babd;"></div>
<div class="c" style="left:299px;top:770px;width:64px;height:42px;background:#fee3a3;border:1px solid #b8babd;"><div style="padding:2px 0px 0 0px;text-align:center;line-height:18px;font-size:13px;color:#1a4b62;white-space:nowrap;"><span class="n"><i class="z"></i></span></div></div>
<div class="c" style="left:211px;top:770px;width:89px;height:42px;background:#fee3a3;border:1px solid #b8babd;"></div>
<div class="c" style="left:115px;top:770px;width:97px;height:42px;background:#fee3a3;border:1px solid #b8babd;"><div style="padding:2px 0px 0 0px;text-align:center;line-height:18px;font-size:13px;color:#1a4b62;white-space:nowrap;"><span class="n"><i class="z"></i></span></div></div>
<div class="c" style="left:35px;top:770px;width:81px;height:42px;background:#fee3a3;border:1px solid #b8babd;"></div>
<div class="c" style="left:1778px;top:811px;width:107px;height:25px;background:#efefef;border:1px solid #b8babd;"><div style="padding:2px 3px 0 3px;text-align:right;line-height:18px;font-size:12px;color:#1a4b62;white-space:nowrap;padding-left:0;">تخفیفات</div></div>
<div class="c" style="left:1737px;top:811px;width:42px;height:25px;background:#efefef;border:1px solid #b8babd;"></div>
<div class="c" style="left:1686px;top:811px;width:52px;height:25px;background:#d4d4d4;border:1px solid #b8babd;"></div>
<div class="c" style="left:1634px;top:811px;width:53px;height:25px;background:#d4d4d4;border:1px solid #b8babd;"></div>
<div class="c" style="left:1550px;top:811px;width:85px;height:25px;background:#d4d4d4;border:1px solid #b8babd;"></div>
<div class="c" style="left:1459px;top:811px;width:92px;height:25px;background:#efefef;border:1px solid #b8babd;"><div style="padding:2px 0px 0 0px;text-align:center;line-height:18px;font-size:13px;color:#1a4b62;white-space:nowrap;"><span class="n"><i class="z"></i></span></div></div>
<div class="c" style="left:1414px;top:811px;width:46px;height:25px;background:#d4d4d4;border:1px solid #b8babd;"></div>
<div class="c" style="left:1363px;top:811px;width:52px;height:25px;background:#d4d4d4;border:1px solid #b8babd;"></div>
<div class="c" style="left:1275px;top:811px;width:89px;height:25px;background:#efefef;border:1px solid #b8babd;"><div style="padding:2px 0px 0 0px;text-align:center;line-height:18px;font-size:13px;color:#1a4b62;white-space:nowrap;"><span class="n"><i class="z"></i></span></div></div>
<div class="c" style="left:1225px;top:811px;width:51px;height:25px;background:#d4d4d4;border:1px solid #b8babd;"></div>
<div class="c" style="left:1173px;top:811px;width:53px;height:25px;background:#d4d4d4;border:1px solid #b8babd;"></div>
<div class="c" style="left:1088px;top:811px;width:86px;height:25px;background:#d4d4d4;border:1px solid #b8babd;"></div>
<div class="c" style="left:998px;top:811px;width:91px;height:25px;background:#efefef;border:1px solid #b8babd;"><div style="padding:2px 0px 0 0px;text-align:center;line-height:18px;font-size:13px;color:#1a4b62;white-space:nowrap;"><span class="n"><i class="z"></i></span></div></div>
<div class="c" style="left:947px;top:811px;width:52px;height:25px;background:#d4d4d4;border:1px solid #b8babd;"></div>
<div class="c" style="left:888px;top:811px;width:60px;height:25px;background:#d4d4d4;border:1px solid #b8babd;"></div>
<div class="c" style="left:802px;top:811px;width:87px;height:25px;background:#d4d4d4;border:1px solid #b8babd;"></div>
<div class="c" style="left:711px;top:811px;width:92px;height:25px;background:#efefef;border:1px solid #b8babd;"><div style="padding:2px 0px 0 0px;text-align:center;line-height:18px;font-size:13px;color:#1a4b62;white-space:nowrap;"><span class="n"><i class="z"></i></span></div></div>
<div class="c" style="left:656px;top:811px;width:56px;height:25px;background:#d4d4d4;border:1px solid #b8babd;"></div>
<div class="c" style="left:596px;top:811px;width:61px;height:25px;background:#d4d4d4;border:1px solid #b8babd;"></div>
<div class="c" style="left:514px;top:811px;width:83px;height:25px;background:#d4d4d4;border:1px solid #b8babd;"></div>
<div class="c" style="left:419px;top:811px;width:96px;height:25px;background:#efefef;border:1px solid #b8babd;"><div style="padding:2px 0px 0 0px;text-align:center;line-height:18px;font-size:13px;color:#1a4b62;white-space:nowrap;"><span class="n"><i class="z"></i></span></div></div>
<div class="c" style="left:362px;top:811px;width:58px;height:25px;background:#d4d4d4;border:1px solid #b8babd;"></div>
<div class="c" style="left:299px;top:811px;width:64px;height:25px;background:#d4d4d4;border:1px solid #b8babd;"></div>
<div class="c" style="left:211px;top:811px;width:89px;height:25px;background:#d4d4d4;border:1px solid #b8babd;"></div>
<div class="c" style="left:115px;top:811px;width:97px;height:25px;background:#efefef;border:1px solid #b8babd;"><div style="padding:2px 0px 0 0px;text-align:center;line-height:18px;font-size:13px;color:#1a4b62;white-space:nowrap;"><span class="n"><i class="z"></i></span></div></div>
<div class="c" style="left:35px;top:811px;width:81px;height:25px;background:#efefef;border:1px solid #b8babd;"></div>
<div class="c" style="left:1778px;top:835px;width:107px;height:25px;background:#fee3a3;border:1px solid #b8babd;"><div style="padding:2px 3px 0 3px;text-align:right;line-height:18px;font-size:12px;color:#1a4b62;white-space:nowrap;padding-left:0;">جمع</div></div>
<div class="c" style="left:1737px;top:835px;width:42px;height:25px;background:#fee3a3;border:1px solid #b8babd;"></div>
<div class="c" style="left:1686px;top:835px;width:52px;height:25px;background:#fee3a3;border:1px solid #b8babd;"></div>
<div class="c" style="left:1634px;top:835px;width:53px;height:25px;background:#fee3a3;border:1px solid #b8babd;"></div>
<div class="c" style="left:1550px;top:835px;width:85px;height:25px;background:#fee3a3;border:1px solid #b8babd;"></div>
<div class="c" style="left:1459px;top:835px;width:92px;height:25px;background:#fee3a3;border:1px solid #b8babd;"><div style="padding:2px 0px 0 0px;text-align:center;line-height:18px;font-size:13px;color:#1a4b62;white-space:nowrap;"><span class="n">۸۴۹,۶۱۶</span></div></div>
<div class="c" style="left:1414px;top:835px;width:46px;height:25px;background:#fee3a3;border:1px solid #b8babd;"></div>
<div class="c" style="left:1363px;top:835px;width:52px;height:25px;background:#fee3a3;border:1px solid #b8babd;"></div>
<div class="c" style="left:1275px;top:835px;width:89px;height:25px;background:#fee3a3;border:1px solid #b8babd;"><div style="padding:2px 0px 0 0px;text-align:center;line-height:18px;font-size:13px;color:#1a4b62;white-space:nowrap;"><span class="n"><i class="z"></i></span></div></div>
<div class="c" style="left:1225px;top:835px;width:51px;height:25px;background:#fee3a3;border:1px solid #b8babd;"></div>
<div class="c" style="left:1173px;top:835px;width:53px;height:25px;background:#fee3a3;border:1px solid #b8babd;"></div>
<div class="c" style="left:1088px;top:835px;width:86px;height:25px;background:#fee3a3;border:1px solid #b8babd;"></div>
<div class="c" style="left:998px;top:835px;width:91px;height:25px;background:#fee3a3;border:1px solid #b8babd;"><div style="padding:2px 0px 0 0px;text-align:center;line-height:18px;font-size:13px;color:#1a4b62;white-space:nowrap;"><span class="n">۸۴۹,۶۱۶</span></div></div>
<div class="c" style="left:947px;top:835px;width:52px;height:25px;background:#fee3a3;border:1px solid #b8babd;"></div>
<div class="c" style="left:888px;top:835px;width:60px;height:25px;background:#fee3a3;border:1px solid #b8babd;"></div>
<div class="c" style="left:802px;top:835px;width:87px;height:25px;background:#fee3a3;border:1px solid #b8babd;"></div>
<div class="c" style="left:711px;top:835px;width:92px;height:25px;background:#fee3a3;border:1px solid #b8babd;"><div style="padding:2px 0px 0 0px;text-align:center;line-height:18px;font-size:13px;color:#1a4b62;white-space:nowrap;"><span class="n">۱۷۹,<i class="z"></i>۵۴</span></div></div>
<div class="c" style="left:656px;top:835px;width:56px;height:25px;background:#fee3a3;border:1px solid #b8babd;"></div>
<div class="c" style="left:596px;top:835px;width:61px;height:25px;background:#fee3a3;border:1px solid #b8babd;"></div>
<div class="c" style="left:514px;top:835px;width:83px;height:25px;background:#fee3a3;border:1px solid #b8babd;"></div>
<div class="c" style="left:419px;top:835px;width:96px;height:25px;background:#fee3a3;border:1px solid #b8babd;"><div style="padding:2px 0px 0 0px;text-align:center;line-height:18px;font-size:13px;color:#1a4b62;white-space:nowrap;"><span class="n">۱,<i class="z"></i>۲۸,۶۷<i class="z"></i></span></div></div>
<div class="c" style="left:362px;top:835px;width:58px;height:25px;background:#fee3a3;border:1px solid #b8babd;"></div>
<div class="c" style="left:299px;top:835px;width:64px;height:25px;background:#fee3a3;border:1px solid #b8babd;"></div>
<div class="c" style="left:211px;top:835px;width:89px;height:25px;background:#fee3a3;border:1px solid #b8babd;"></div>
<div class="c" style="left:115px;top:835px;width:97px;height:25px;background:#fee3a3;border:1px solid #b8babd;"><div style="padding:2px 0px 0 0px;text-align:center;line-height:18px;font-size:13px;color:#1a4b62;white-space:nowrap;"><span class="n">۱,۴۷۲,<i class="z"></i>۵۵</span></div></div>
<div class="c" style="left:35px;top:835px;width:81px;height:25px;background:#fee3a3;border:1px solid #b8babd;"></div>
<div class="c" style="left:1733px;top:950px;width:152px;height:25px;background:#d4d4d4;border:1px solid #b8babd;"><div style="padding:2px 3px 0 3px;text-align:right;line-height:18px;font-size:12px;color:#1a4b62;font-weight:bold;white-space:nowrap;padding-left:0;">مواد اولیه داخلی</div></div>
<div class="c" style="left:1701px;top:950px;width:33px;height:25px;background:#d4d4d4;border:1px solid #b8babd;"></div>
<div class="c" style="left:1663px;top:950px;width:39px;height:25px;background:#d4d4d4;border:1px solid #b8babd;"></div>
<div class="c" style="left:1577px;top:950px;width:87px;height:25px;background:#d4d4d4;border:1px solid #b8babd;"></div>
<div class="c" style="left:1466px;top:950px;width:112px;height:25px;background:#d4d4d4;border:1px solid #b8babd;"></div>
<div class="c" style="left:1429px;top:950px;width:38px;height:25px;background:#d4d4d4;border:1px solid #b8babd;"></div>
<div class="c" style="left:1365px;top:950px;width:65px;height:25px;background:#d4d4d4;border:1px solid #b8babd;"></div>
<div class="c" style="left:1250px;top:950px;width:116px;height:25px;background:#d4d4d4;border:1px solid #b8babd;"></div>
<div class="c" style="left:1201px;top:950px;width:50px;height:25px;background:#d4d4d4;border:1px solid #b8babd;"></div>
<div class="c" style="left:1090px;top:950px;width:112px;height:25px;background:#d4d4d4;border:1px solid #b8babd;"></div>
<div class="c" style="left:946px;top:950px;width:145px;height:25px;background:#d4d4d4;border:1px solid #b8babd;"></div>
<div class="c" style="left:907px;top:950px;width:40px;height:25px;background:#d4d4d4;border:1px solid #b8babd;"></div>
<div class="c" style="left:815px;top:950px;width:93px;height:25px;background:#d4d4d4;border:1px solid #b8babd;"></div>
<div class="c" style="left:700px;top:950px;width:116px;height:25px;background:#d4d4d4;border:1px solid #b8babd;"></div>
<div class="c" style="left:634px;top:950px;width:67px;height:25px;background:#d4d4d4;border:1px solid #b8babd;"></div>
<div class="c" style="left:477px;top:950px;width:158px;height:25px;background:#d4d4d4;border:1px solid #b8babd;"></div>
<div class="c" style="left:279px;top:950px;width:199px;height:25px;background:#d4d4d4;border:1px solid #b8babd;"></div>
<div class="c" style="left:236px;top:950px;width:44px;height:25px;background:#d4d4d4;border:1px solid #b8babd;"></div>
<div class="c" style="left:147px;top:950px;width:90px;height:25px;background:#d4d4d4;border:1px solid #b8babd;"></div>
<div class="c" style="left:35px;top:950px;width:113px;height:25px;background:#d4d4d4;border:1px solid #b8babd;"></div>
<div class="c" style="left:1733px;top:974px;width:152px;height:26px;background:#d4e5f6;border:1px solid #b8babd;"><div style="padding:2px 3px 0 3px;text-align:right;line-height:18px;font-size:12px;color:#1a4b62;white-space:nowrap;padding-left:0;">مواد اولیه پلي اتيلن اصلي</div></div>
<div class="c" style="left:1701px;top:974px;width:33px;height:26px;background:#d4e5f6;border:1px solid #b8babd;"><div style="padding:2px 3px 0 3px;text-align:right;line-height:18px;font-size:12px;color:#1a4b62;white-space:nowrap;padding-left:0;">تن</div></div>
<div class="c" style="left:1663px;top:974px;width:39px;height:26px;background:#d4e5f6;border:1px solid #b8babd;"><div style="padding:2px 0px 0 0px;text-align:center;line-height:18px;font-size:13px;color:#1a4b62;white-space:nowrap;"><span class="n">۱,<i class="z"></i>۳۱</span></div></div>
<div class="c" style="left:1577px;top:974px;width:87px;height:26px;background:#fee3a3;border:1px solid #b8babd;"><div style="padding:2px 0px 0 0px;text-align:center;line-height:18px;font-size:13px;color:#1a4b62;white-space:nowrap;"><span class="n">۶۷۵,<i class="z"></i><i class="z"></i>۹,۶۹۹</span></div></div>
<div class="c" style="left:1466px;top:974px;width:112px;height:26px;background:#d4e5f6;border:1px solid #b8babd;"><div style="padding:2px 0px 0 0px;text-align:center;line-height:18px;font-size:13px;color:#1a4b62;white-space:nowrap;"><span class="n">۶۹۵,۹۳۵</span></div></div>
<div class="c" style="left:1429px;top:974px;width:38px;height:26px;background:#d4e5f6;border:1px solid #b8babd;"><div style="padding:2px 0px 0 0px;text-align:center;line-height:18px;font-size:13px;color:#1a4b62;white-space:nowrap;"><span class="n"><i class="z"></i></span></div></div>
<div class="c" style="left:1365px;top:974px;width:65px;height:26px;background:#fee3a3;border:1px solid #b8babd;"><div style="padding:2px 0px 0 0px;text-align:center;line-height:18px;font-size:13px;color:#1a4b62;white-space:nowrap;"><span class="n"><i class="z"></i></span></div></div>
<div class="c" style="left:1250px;top:974px;width:116px;height:26px;background:#d4e5f6;border:1px solid #b8babd;"><div style="padding:2px 0px 0 0px;text-align:center;line-height:18px;font-size:13px;color:#1a4b62;white-space:nowrap;"><span class="n"><i class="z"></i></span></div></div>
<div class="c" style="left:1201px;top:974px;width:50px;height:26px;background:#fee3a3;border:1px solid #b8babd;"><div style="padding:2px 0px 0 0px;text-align:center;line-height:18px;font-size:13px;color:#1a4b62;white-space:nowrap;"><span class="n">۱,<i class="z"></i>۳۱</span></div></div>
<div class="c" style="left:1090px;top:974px;width:112px;height:26px;background:#fee3a3;border:1px solid #b8babd;"><div style="padding:2px 0px 0 0px;text-align:center;line-height:18px;font-size:13px;color:#1a4b62;white-space:nowrap;"><span class="n">۶۷۵,<i class="z"></i><i class="z"></i>۹,۶۹۹</span></div></div>
<div class="c" style="left:946px;top:974px;width:145px;height:26px;background:#fee3a3;border:1px solid #b8babd;"><div style="padding:2px 0px 0 0px;text-align:center;line-height:18px;font-size:13px;color:#1a4b62;white-space:nowrap;"><span class="n">۶۹۵,۹۳۵</span></div></div>
<div class="c" style="left:907px;top:974px;width:40px;height:26px;background:#d4e5f6;border:1px solid #b8babd;"><div style="padding:2px 0px 0 0px;text-align:center;line-height:18px;font-size:13px;color:#1a4b62;white-space:nowrap;"><span class="n">۱۴<i class="z"></i></span></div></div>
<div class="c" style="left:815px;top:974px;width:93px;height:26px;background:#fee3a3;border:1px solid #b8babd;"><div style="padding:2px 0px 0 0px;text-align:center;line-height:18px;font-size:13px;color:#1a4b62;white-space:nowrap;"><span class="n">۸<i class="z"></i>۵,۷۷۸,۵۷۱</span></div></div>
<div class="c" style="left:700px;top:974px;width:116px;height:26px;background:#d4e5f6;border:1px solid #b8babd;"><div style="padding:2px 0px 0 0px;text-align:center;line-height:18px;font-size:13px;color:#1a4b62;white-space:nowrap;"><span class="n">۱۱۲,۸<i class="z"></i>۹</span></div></div>
<div class="c" style="left:634px;top:974px;width:67px;height:26px;background:#fee3a3;border:1px solid #b8babd;"><div style="padding:2px 0px 0 0px;text-align:center;line-height:18px;font-size:13px;color:#1a4b62;white-space:nowrap;"><span class="n">۱,۱۷۱</span></div></div>
<div class="c" style="left:477px;top:974px;width:158px;height:26px;background:#fee3a3;border:1px solid #b8babd;"><div style="padding:2px 0px 0 0px;text-align:center;line-height:18px;font-size:13px;color:#1a4b62;white-space:nowrap;"><span class="n">۶۹<i class="z"></i>,۶۴۳,۸۹۴</span></div></div>
<div class="c" style="left:279px;top:974px;width:199px;height:26px;background:#fee3a3;border:1px solid #b8babd;"><div style="padding:2px 0px 0 0px;text-align:center;line-height:18px;font-size:13px;color:#1a4b62;white-space:nowrap;"><span class="n">۸<i class="z"></i>۸,۷۴۴</span></div></div>
<div class="c" style="left:236px;top:974px;width:44px;height:26px;background:#d4e5f6;border:1px solid #b8babd;"><div style="padding:2px 0px 0 0px;text-align:center;line-height:18px;font-size:13px;color:#1a4b62;white-space:nowrap;"><span class="n">۱,۴۳۷</span></div></div>
<div class="c" style="left:147px;top:974px;width:90px;height:26px;background:#fee3a3;border:1px solid #b8babd;"><div style="padding:2px 0px 0 0px;text-align:center;line-height:18px;font-size:13px;color:#1a4b62;white-space:nowrap;"><span class="n">۴۵۲,۲۳۱,<i class="z"></i>۳۷</span></div></div>
<div class="c" style="left:35px;top:974px;width:113px;height:26px;background:#d4e5f6;border:1px solid #b8babd;"><div style="padding:2px 0px 0 0px;text-align:center;line-height:18px;font-size:13px;color:#1a4b62;white-space:nowrap;"><span class="n">۶۴۹,۸۵۶</span></div></div>
<div class="c" style="left:1733px;top:999px;width:152px;height:25px;background:#efefef;border:1px solid #b8babd;"><div style="padding:2px 3px 0 3px;text-align:right;line-height:18px;font-size:12px;color:#1a4b62;white-space:nowrap;padding-left:0;">مواد اولیه کمکي</div></div>
<div class="c" style="left:1701px;top:999px;width:33px;height:25px;background:#efefef;border:1px solid #b8babd;"><div style="padding:2px 3px 0 3px;text-align:right;line-height:18px;font-size:12px;color:#1a4b62;white-space:nowrap;padding-left:0;">تن</div></div>
<div class="c" style="left:1663px;top:999px;width:39px;height:25px;background:#efefef;border:1px solid #b8babd;"><div style="padding:2px 0px 0 0px;text-align:center;line-height:18px;font-size:13px;color:#1a4b62;white-space:nowrap;"><span class="n">۴۵</span></div></div>
<div class="c" style="left:1577px;top:999px;width:87px;height:25px;background:#fee3a3;border:1px solid #b8babd;"><div style="padding:2px 0px 0 0px;text-align:center;line-height:18px;font-size:13px;color:#1a4b62;white-space:nowrap;"><span class="n">۹۲۱,۴۶۶,۶۶۷</span></div></div>
<div class="c" style="left:1466px;top:999px;width:112px;height:25px;background:#efefef;border:1px solid #b8babd;"><div style="padding:2px 0px 0 0px;text-align:center;line-height:18px;font-size:13px;color:#1a4b62;white-space:nowrap;"><span class="n">۴۱,۴۶۶</span></div></div>
<div class="c" style="left:1429px;top:999px;width:38px;height:25px;background:#efefef;border:1px solid #b8babd;"><div style="padding:2px 0px 0 0px;text-align:center;line-height:18px;font-size:13px;color:#1a4b62;white-space:nowrap;"><span class="n"><i class="z"></i></span></div></div>
<div class="c" style="left:1365px;top:999px;width:65px;height:25px;background:#fee3a3;border:1px solid #b8babd;"><div style="padding:2px 0px 0 0px;text-align:center;line-height:18px;font-size:13px;color:#1a4b62;white-space:nowrap;"><span class="n"><i class="z"></i></span></div></div>
<div class="c" style="left:1250px;top:999px;width:116px;height:25px;background:#efefef;border:1px solid #b8babd;"><div style="padding:2px 0px 0 0px;text-align:center;line-height:18px;font-size:13px;color:#1a4b62;white-space:nowrap;"><span class="n"><i class="z"></i></span></div></div>
<div class="c" style="left:1201px;top:999px;width:50px;height:25px;background:#fee3a3;border:1px solid #b8babd;"><div style="padding:2px 0px 0 0px;text-align:center;line-height:18px;font-size:13px;color:#1a4b62;white-space:nowrap;"><span class="n">۴۵</span></div></div>
<div class="c" style="left:1090px;top:999px;width:112px;height:25px;background:#fee3a3;border:1px solid #b8babd;"><div style="padding:2px 0px 0 0px;text-align:center;line-height:18px;font-size:13px;color:#1a4b62;white-space:nowrap;"><span class="n">۹۲۱,۴۶۶,۶۶۷</span></div></div>
<div class="c" style="left:946px;top:999px;width:145px;height:25px;background:#fee3a3;border:1px solid #b8babd;"><div style="padding:2px 0px 0 0px;text-align:center;line-height:18px;font-size:13px;color:#1a4b62;white-space:nowrap;"><span class="n">۴۱,۴۶۶</span></div></div>
<div class="c" style="left:907px;top:999px;width:40px;height:25px;background:#efefef;border:1px solid #b8babd;"><div style="padding:2px 0px 0 0px;text-align:center;line-height:18px;font-size:13px;color:#1a4b62;white-space:nowrap;"><span class="n"><i class="z"></i></span></div></div>
<div class="c" style="left:815px;top:999px;width:93px;height:25px;background:#fee3a3;border:1px solid #b8babd;"><div style="padding:2px 0px 0 0px;text-align:center;line-height:18px;font-size:13px;color:#1a4b62;white-space:nowrap;"><span class="n"><i class="z"></i></span></div></div>
<div class="c" style="left:700px;top:999px;width:116px;height:25px;background:#efefef;border:1px solid #b8babd;"><div style="padding:2px 0px 0 0px;text-align:center;line-height:18px;font-size:13px;color:#1a4b62;white-space:nowrap;"><span class="n"><i class="z"></i></span></div></div>
<div class="c" style="left:634px;top:999px;width:67px;height:25px;background:#fee3a3;border:1px solid #b8babd;"><div style="padding:2px 0px 0 0px;text-align:center;line-height:18px;font-size:13px;color:#1a4b62;white-space:nowrap;"><span class="n">۴۵</span></div></div>
<div class="c" style="left:477px;top:999px;width:158px;height:25px;background:#fee3a3;border:1px solid #b8babd;"><div style="padding:2px 0px 0 0px;text-align:center;line-height:18px;font-size:13px;color:#1a4b62;white-space:nowrap;"><span class="n">۹۲۱,۴۶۶,۶۶۷</span></div></div>
<div class="c" style="left:279px;top:999px;width:199px;height:25px;background:#fee3a3;border:1px solid #b8babd;"><div style="padding:2px 0px 0 0px;text-align:center;line-height:18px;font-size:13px;color:#1a4b62;white-space:nowrap;"><span class="n">۴۱,۴۶۶</span></div></div>
<div class="c" style="left:236px;top:999px;width:44px;height:25px;background:#efefef;border:1px solid #b8babd;"><div style="padding:2px 0px 0 0px;text-align:center;line-height:18px;font-size:13px;color:#1a4b62;white-space:nowrap;"><span class="n">۲۳</span></div></div>
<div class="c" style="left:147px;top:999px;width:90px;height:25px;background:#fee3a3;border:1px solid #b8babd;"><div style="padding:2px 0px 0 0px;text-align:center;line-height:18px;font-size:13px;color:#1a4b62;white-space:nowrap;"><span class="n">۵۷<i class="z"></i>,۹۵۶,۵۲۲</span></div></div>
<div class="c" style="left:35px;top:999px;width:113px;height:25px;background:#efefef;border:1px solid #b8babd;"><div style="padding:2px 0px 0 0px;text-align:center;line-height:18px;font-size:13px;color:#1a4b62;white-space:nowrap;"><span class="n">۱۳,۱۳۲</span></div></div>
<div class="c" style="left:1733px;top:1023px;width:152px;height:25px;background:#fee3a3;border:1px solid #b8babd;"><div style="padding:2px 3px 0 3px;text-align:right;line-height:18px;font-size:12px;color:#1a4b62;white-space:nowrap;padding-left:0;">جمع مواد اولیه داخلی</div></div>
<div class="c" style="left:1701px;top:1023px;width:33px;height:25px;background:#fee3a3;border:1px solid #b8babd;"></div>
<div class="c" style="left:1663px;top:1023px;width:39px;height:25px;background:#fee3a3;border:1px solid #b8babd;"><div style="padding:2px 3px 0 3px;text-align:left;line-height:18px;font-size:13px;color:#1a4b62;direction:ltr;padding-left:4px;text-align:right;"><span class="n"><i class="z"></i></span></div></div>
<div class="c" style="left:1577px;top:1023px;width:87px;height:25px;background:#fee3a3;border:1px solid #b8babd;"><div style="padding:2px 3px 0 3px;text-align:left;line-height:18px;font-size:13px;color:#1a4b62;direction:ltr;padding-left:4px;text-align:right;"><span class="n"><i class="z"></i></span></div></div>
<div class="c" style="left:1466px;top:1023px;width:112px;height:25px;background:#fee3a3;border:1px solid #b8babd;"><div style="padding:2px 0px 0 0px;text-align:center;line-height:18px;font-size:13px;color:#1a4b62;white-space:nowrap;"><span class="n">۷۳۷,۴<i class="z"></i>۱</span></div></div>
<div class="c" style="left:1429px;top:1023px;width:38px;height:25px;background:#fee3a3;border:1px solid #b8babd;"><div style="padding:2px 3px 0 3px;text-align:left;line-height:18px;font-size:13px;color:#1a4b62;direction:ltr;padding-left:4px;text-align:right;"><span class="n"><i class="z"></i></span></div></div>
<div class="c" style="left:1365px;top:1023px;width:65px;height:25px;background:#fee3a3;border:1px solid #b8babd;"><div style="padding:2px 3px 0 3px;text-align:left;line-height:18px;font-size:13px;color:#1a4b62;direction:ltr;padding-left:4px;text-align:right;"><span class="n"><i class="z"></i></span></div></div>
<div class="c" style="left:1250px;top:1023px;width:116px;height:25px;background:#fee3a3;border:1px solid #b8babd;"><div style="padding:2px 0px 0 0px;text-align:center;line-height:18px;font-size:13px;color:#1a4b62;white-space:nowrap;"><span class="n"><i class="z"></i></span></div></div>
<div class="c" style="left:1201px;top:1023px;width:50px;height:25px;background:#fee3a3;border:1px solid #b8babd;"><div style="padding:2px 3px 0 3px;text-align:left;line-height:18px;font-size:13px;color:#1a4b62;direction:ltr;padding-left:4px;text-align:right;"><span class="n"><i class="z"></i></span></div></div>
<div class="c" style="left:1090px;top:1023px;width:112px;height:25px;background:#fee3a3;border:1px solid #b8babd;"><div style="padding:2px 3px 0 3px;text-align:left;line-height:18px;font-size:13px;color:#1a4b62;direction:ltr;padding-left:4px;text-align:right;"><span class="n"><i class="z"></i></span></div></div>
<div class="c" style="left:946px;top:1023px;width:145px;height:25px;background:#fee3a3;border:1px solid #b8babd;"><div style="padding:2px 0px 0 0px;text-align:center;line-height:18px;font-size:13px;color:#1a4b62;white-space:nowrap;"><span class="n">۷۳۷,۴<i class="z"></i>۱</span></div></div>
<div class="c" style="left:907px;top:1023px;width:40px;height:25px;background:#fee3a3;border:1px solid #b8babd;"><div style="padding:2px 3px 0 3px;text-align:left;line-height:18px;font-size:13px;color:#1a4b62;direction:ltr;padding-left:4px;text-align:right;"><span class="n"><i class="z"></i></span></div></div>
<div class="c" style="left:815px;top:1023px;width:93px;height:25px;background:#fee3a3;border:1px solid #b8babd;"><div style="padding:2px 3px 0 3px;text-align:left;line-height:18px;font-size:13px;color:#1a4b62;direction:ltr;padding-left:4px;text-align:right;"><span class="n"><i class="z"></i></span></div></div>
<div class="c" style="left:700px;top:1023px;width:116px;height:25px;background:#fee3a3;border:1px solid #b8babd;"><div style="padding:2px 0px 0 0px;text-align:center;line-height:18px;font-size:13px;color:#1a4b62;white-space:nowrap;"><span class="n">۱۱۲,۸<i class="z"></i>۹</span></div></div>
<div class="c" style="left:634px;top:1023px;width:67px;height:25px;background:#fee3a3;border:1px solid #b8babd;"><div style="padding:2px 3px 0 3px;text-align:left;line-height:18px;font-size:13px;color:#1a4b62;direction:ltr;padding-left:4px;text-align:right;"><span class="n"><i class="z"></i></span></div></div>
<div class="c" style="left:477px;top:1023px;width:158px;height:25px;background:#fee3a3;border:1px solid #b8babd;"><div style="padding:2px 3px 0 3px;text-align:left;line-height:18px;font-size:13px;color:#1a4b62;direction:ltr;padding-left:4px;text-align:right;"><span class="n"><i class="z"></i></span></div></div>
<div class="c" style="left:279px;top:1023px;width:199px;height:25px;background:#fee3a3;border:1px solid #b8babd;"><div style="padding:2px 0px 0 0px;text-align:center;line-height:18px;font-size:13px;color:#1a4b62;white-space:nowrap;"><span class="n">۸۵<i class="z"></i>,۲۱<i class="z"></i></span></div></div>
<div class="c" style="left:236px;top:1023px;width:44px;height:25px;background:#fee3a3;border:1px solid #b8babd;"><div style="padding:2px 3px 0 3px;text-align:left;line-height:18px;font-size:13px;color:#1a4b62;direction:ltr;padding-left:4px;text-align:right;"><span class="n"><i class="z"></i></span></div></div>
<div class="c" style="left:147px;top:1023px;width:90px;height:25px;background:#fee3a3;border:1px solid #b8babd;"><div style="padding:2px 3px 0 3px;text-align:left;line-height:18px;font-size:13px;color:#1a4b62;direction:ltr;padding-left:4px;text-align:right;"><span class="n"><i class="z"></i></span></div></div>
<div class="c" style="left:35px;top:1023px;width:113px;height:25px;background:#fee3a3;border:1px solid #b8babd;"><div style="padding:2px 0px 0 0px;text-align:center;line-height:18px;font-size:13px;color:#1a4b62;white-space:nowrap;"><span class="n">۶۶۲,۹۸۸</span></div></div>
<div class="c" style="left:1733px;top:1047px;width:152px;height:25px;background:#d4d4d4;border:1px solid #b8babd;"><div style="padding:2px 3px 0 3px;text-align:right;line-height:18px;font-size:12px;color:#1a4b62;font-weight:bold;white-space:nowrap;padding-left:0;">مواد اولیه وارداتی</div></div>
<div class="c" style="left:1701px;top:1047px;width:33px;height:25px;background:#d4d4d4;border:1px solid #b8babd;"></div>
<div class="c" style="left:1663px;top:1047px;width:39px;height:25px;background:#d4d4d4;border:1px solid #b8babd;"></div>
<div class="c" style="left:1577px;top:1047px;width:87px;height:25px;background:#d4d4d4;border:1px solid #b8babd;"></div>
<div class="c" style="left:1466px;top:1047px;width:112px;height:25px;background:#d4d4d4;border:1px solid #b8babd;"></div>
<div class="c" style="left:1429px;top:1047px;width:38px;height:25px;background:#d4d4d4;border:1px solid #b8babd;"></div>
<div class="c" style="left:1365px;top:1047px;width:65px;height:25px;background:#d4d4d4;border:1px solid #b8babd;"></div>
<div class="c" style="left:1250px;top:1047px;width:116px;height:25px;background:#d4d4d4;border:1px solid #b8babd;"></div>
<div class="c" style="left:1201px;top:1047px;width:50px;height:25px;background:#d4d4d4;border:1px solid #b8babd;"></div>
<div class="c" style="left:1090px;top:1047px;width:112px;height:25px;background:#d4d4d4;border:1px solid #b8babd;"></div>
<div class="c" style="left:946px;top:1047px;width:145px;height:25px;background:#d4d4d4;border:1px solid #b8babd;"></div>
<div class="c" style="left:907px;top:1047px;width:40px;height:25px;background:#d4d4d4;border:1px solid #b8babd;"></div>
<div class="c" style="left:815px;top:1047px;width:93px;height:25px;background:#d4d4d4;border:1px solid #b8babd;"></div>
<div class="c" style="left:700px;top:1047px;width:116px;height:25px;background:#d4d4d4;border:1px solid #b8babd;"></div>
<div class="c" style="left:634px;top:1047px;width:67px;height:25px;background:#d4d4d4;border:1px solid #b8babd;"></div>
<div class="c" style="left:477px;top:1047px;width:158px;height:25px;background:#d4d4d4;border:1px solid #b8babd;"></div>
<div class="c" style="left:279px;top:1047px;width:199px;height:25px;background:#d4d4d4;border:1px solid #b8babd;"></div>
<div class="c" style="left:236px;top:1047px;width:44px;height:25px;background:#d4d4d4;border:1px solid #b8babd;"></div>
<div class="c" style="left:147px;top:1047px;width:90px;height:25px;background:#d4d4d4;border:1px solid #b8babd;"></div>
<div class="c" style="left:35px;top:1047px;width:113px;height:25px;background:#d4d4d4;border:1px solid #b8babd;"></div>
<div class="c" style="left:1733px;top:1071px;width:152px;height:26px;background:#fee3a3;border:1px solid #b8babd;"><div style="padding:2px 3px 0 3px;text-align:right;line-height:18px;font-size:12px;color:#1a4b62;white-space:nowrap;padding-left:0;">جمع مواد اولیه وارداتی</div></div>
<div class="c" style="left:1701px;top:1071px;width:33px;height:26px;background:#fee3a3;border:1px solid #b8babd;"></div>
<div class="c" style="left:1663px;top:1071px;width:39px;height:26px;background:#fee3a3;border:1px solid #b8babd;"></div>
<div class="c" style="left:1577px;top:1071px;width:87px;height:26px;background:#fee3a3;border:1px solid #b8babd;"></div>
<div class="c" style="left:1466px;top:1071px;width:112px;height:26px;background:#fee3a3;border:1px solid #b8babd;"></div>
<div class="c" style="left:1429px;top:1071px;width:38px;height:26px;background:#fee3a3;border:1px solid #b8babd;"></div>
<div class="c" style="left:1365px;top:1071px;width:65px;height:26px;background:#fee3a3;border:1px solid #b8babd;"></div>
<div class="c" style="left:1250px;top:1071px;width:116px;height:26px;background:#fee3a3;border:1px solid #b8babd;"></div>
<div class="c" style="left:1201px;top:1071px;width:50px;height:26px;background:#fee3a3;border:1px solid #b8babd;"></div>
<div class="c" style="left:1090px;top:1071px;width:112px;height:26px;background:#fee3a3;border:1px solid #b8babd;"></div>
<div class="c" style="left:946px;top:1071px;width:145px;height:26px;background:#fee3a3;border:1px solid #b8babd;"></div>
<div class="c" style="left:907px;top:1071px;width:40px;height:26px;background:#fee3a3;border:1px solid #b8babd;"></div>
<div class="c" style="left:815px;top:1071px;width:93px;height:26px;background:#fee3a3;border:1px solid #b8babd;"></div>
<div class="c" style="left:700px;top:1071px;width:116px;height:26px;background:#fee3a3;border:1px solid #b8babd;"></div>
<div class="c" style="left:634px;top:1071px;width:67px;height:26px;background:#fee3a3;border:1px solid #b8babd;"></div>
<div class="c" style="left:477px;top:1071px;width:158px;height:26px;background:#fee3a3;border:1px solid #b8babd;"></div>
<div class="c" style="left:279px;top:1071px;width:199px;height:26px;background:#fee3a3;border:1px solid #b8babd;"></div>
<div class="c" style="left:236px;top:1071px;width:44px;height:26px;background:#fee3a3;border:1px solid #b8babd;"></div>
<div class="c" style="left:147px;top:1071px;width:90px;height:26px;background:#fee3a3;border:1px solid #b8babd;"></div>
<div class="c" style="left:35px;top:1071px;width:113px;height:26px;background:#fee3a3;border:1px solid #b8babd;"></div><div class="a" style="left:953px;top:540px;width:0;height:0;"><div style="position:absolute;left:0;top:0;transform:translate(-50%,-50%) rotate(-46.5deg);font-size:95px;font-weight:bold;color:rgba(0,0,0,0.06);white-space:nowrap;direction:ltr;line-height:100px;">@Codal360.ir</div></div><div class="c" style="left:1737px;top:370px;width:148px;height:25px;background:#0a98cf;border:1px solid #84d3f2;"><div style="padding:3px 3px 0 3px;text-align:center;line-height:17px;font-size:12px;color:#ffffff;font-weight:bold;">شرح</div></div>
<div class="c" style="left:1459px;top:370px;width:279px;height:25px;background:#0a98cf;border:1px solid #84d3f2;"><div style="padding:3px 3px 0 3px;text-align:center;line-height:17px;font-size:12px;color:#ffffff;font-weight:bold;">از ابتدای سال مالی تا تاریخ <span class="n">۱۴<i class="z"></i>۴/<i class="z"></i>۷/۳<i class="z"></i></span></div></div>
<div class="c" style="left:1275px;top:370px;width:185px;height:25px;background:#0a98cf;border:1px solid #84d3f2;"><div style="padding:3px 3px 0 3px;text-align:center;line-height:17px;font-size:12px;color:#ffffff;font-weight:bold;">اصلاحات</div></div>
<div class="c" style="left:998px;top:370px;width:278px;height:25px;background:#0a98cf;border:1px solid #84d3f2;"><div style="padding:3px 3px 0 3px;text-align:center;line-height:17px;font-size:12px;color:#ffffff;font-weight:bold;">از ابتدای سال مالی تا تاریخ <span class="n">۱۴<i class="z"></i>۴/<i class="z"></i>۷/۳<i class="z"></i></span> (اصلاح شده)</div></div>
<div class="c" style="left:711px;top:370px;width:288px;height:25px;background:#0a98cf;border:1px solid #84d3f2;"><div style="padding:3px 3px 0 3px;text-align:center;line-height:17px;font-size:12px;color:#ffffff;font-weight:bold;">دوره یک ماهه منتهی به <span class="n">۱۴<i class="z"></i>۴/<i class="z"></i>۸/۳<i class="z"></i></span></div></div>
<div class="c" style="left:419px;top:370px;width:293px;height:25px;background:#0a98cf;border:1px solid #84d3f2;"><div style="padding:3px 3px 0 3px;text-align:center;line-height:17px;font-size:12px;color:#ffffff;font-weight:bold;">از ابتدای سال مالی تا تاریخ <span class="n">۱۴<i class="z"></i>۴/<i class="z"></i>۸/۳<i class="z"></i></span></div></div>
<div class="c" style="left:115px;top:370px;width:305px;height:25px;background:#0a98cf;border:1px solid #84d3f2;"><div style="padding:3px 3px 0 3px;text-align:center;line-height:17px;font-size:12px;color:#ffffff;font-weight:bold;">از ابتدای سال مالی تا تاریخ <span class="n">۱۴<i class="z"></i>۳/<i class="z"></i>۸/۳<i class="z"></i></span></div></div>
<div class="c" style="left:35px;top:370px;width:81px;height:65px;background:#0a98cf;border:1px solid #84d3f2;border-bottom:0;"><div style="padding:3px 3px 0 3px;text-align:center;line-height:17px;font-size:12px;color:#ffffff;font-weight:bold;">وضعیت<br>محصول-واحد</div></div>
<div class="c" style="left:1778px;top:394px;width:107px;height:41px;background:#0a98cf;border:1px solid #84d3f2;border-bottom:0;"><div style="padding:3px 3px 0 3px;text-align:center;line-height:17px;font-size:12px;color:#ffffff;font-weight:bold;">نام محصول</div></div>
<div class="c" style="left:1737px;top:394px;width:42px;height:41px;background:#0a98cf;border:1px solid #84d3f2;border-bottom:0;"><div style="padding:3px 3px 0 3px;text-align:center;line-height:17px;font-size:12px;color:#ffffff;font-weight:bold;">واحد</div></div>
<div class="c" style="left:1686px;top:394px;width:52px;height:41px;background:#0a98cf;border:1px solid #84d3f2;border-bottom:0;"><div style="padding:3px 3px 0 3px;text-align:center;line-height:17px;font-size:12px;color:#ffffff;font-weight:bold;">تعداد<br>تولید</div></div>
<div class="c" style="left:1634px;top:394px;width:53px;height:41px;background:#0a98cf;border:1px solid #84d3f2;border-bottom:0;"><div style="padding:3px 3px 0 3px;text-align:center;line-height:17px;font-size:12px;color:#ffffff;font-weight:bold;">تعداد<br>فروش</div></div>
<div class="c" style="left:1550px;top:394px;width:85px;height:41px;background:#0a98cf;border:1px solid #84d3f2;border-bottom:0;"><div style="padding:3px 3px 0 3px;text-align:center;line-height:17px;font-size:12px;color:#ffffff;font-weight:bold;">نرخ فروش<br>(ریال)</div></div>
<div class="c" style="left:1459px;top:394px;width:92px;height:41px;background:#0a98cf;border:1px solid #84d3f2;border-bottom:0;"><div style="padding:3px 3px 0 3px;text-align:center;line-height:17px;font-size:12px;color:#ffffff;font-weight:bold;">مبلغ فروش<br>(میلیون ریال)</div></div>
<div class="c" style="left:1414px;top:394px;width:46px;height:41px;background:#0a98cf;border:1px solid #84d3f2;border-bottom:0;"><div style="padding:3px 3px 0 3px;text-align:center;line-height:17px;font-size:12px;color:#ffffff;font-weight:bold;">تعداد<br>تولید</div></div>
<div class="c" style="left:1363px;top:394px;width:52px;height:41px;background:#0a98cf;border:1px solid #84d3f2;border-bottom:0;"><div style="padding:3px 3px 0 3px;text-align:center;line-height:17px;font-size:12px;color:#ffffff;font-weight:bold;">تعداد<br>فروش</div></div>
<div class="c" style="left:1275px;top:394px;width:89px;height:41px;background:#0a98cf;border:1px solid #84d3f2;border-bottom:0;"><div style="padding:3px 3px 0 3px;text-align:center;line-height:17px;font-size:12px;color:#ffffff;font-weight:bold;">مبلغ فروش<br>(میلیون ریال)</div></div>
<div class="c" style="left:1225px;top:394px;width:51px;height:41px;background:#0a98cf;border:1px solid #84d3f2;border-bottom:0;"><div style="padding:3px 3px 0 3px;text-align:center;line-height:17px;font-size:12px;color:#ffffff;font-weight:bold;">تعداد<br>تولید</div></div>
<div class="c" style="left:1173px;top:394px;width:53px;height:41px;background:#0a98cf;border:1px solid #84d3f2;border-bottom:0;"><div style="padding:3px 3px 0 3px;text-align:center;line-height:17px;font-size:12px;color:#ffffff;font-weight:bold;">تعداد<br>فروش</div></div>
<div class="c" style="left:1088px;top:394px;width:86px;height:41px;background:#0a98cf;border:1px solid #84d3f2;border-bottom:0;"><div style="padding:3px 3px 0 3px;text-align:center;line-height:17px;font-size:12px;color:#ffffff;font-weight:bold;">نرخ فروش<br>(ریال)</div></div>
<div class="c" style="left:998px;top:394px;width:91px;height:41px;background:#0a98cf;border:1px solid #84d3f2;border-bottom:0;"><div style="padding:3px 3px 0 3px;text-align:center;line-height:17px;font-size:12px;color:#ffffff;font-weight:bold;">مبلغ فروش<br>(میلیون ریال)</div></div>
<div class="c" style="left:947px;top:394px;width:52px;height:41px;background:#0a98cf;border:1px solid #84d3f2;border-bottom:0;"><div style="padding:3px 3px 0 3px;text-align:center;line-height:17px;font-size:12px;color:#ffffff;font-weight:bold;">تعداد<br>تولید</div></div>
<div class="c" style="left:888px;top:394px;width:60px;height:41px;background:#0a98cf;border:1px solid #84d3f2;border-bottom:0;"><div style="padding:3px 3px 0 3px;text-align:center;line-height:17px;font-size:12px;color:#ffffff;font-weight:bold;">تعداد<br>فروش</div></div>
<div class="c" style="left:802px;top:394px;width:87px;height:41px;background:#0a98cf;border:1px solid #84d3f2;border-bottom:0;"><div style="padding:3px 3px 0 3px;text-align:center;line-height:17px;font-size:12px;color:#ffffff;font-weight:bold;">نرخ فروش<br>(ریال)</div></div>
<div class="c" style="left:711px;top:394px;width:92px;height:41px;background:#0a98cf;border:1px solid #84d3f2;border-bottom:0;"><div style="padding:3px 3px 0 3px;text-align:center;line-height:17px;font-size:12px;color:#ffffff;font-weight:bold;">مبلغ فروش<br>(میلیون ریال)</div></div>
<div class="c" style="left:656px;top:394px;width:56px;height:41px;background:#0a98cf;border:1px solid #84d3f2;border-bottom:0;"><div style="padding:3px 3px 0 3px;text-align:center;line-height:17px;font-size:12px;color:#ffffff;font-weight:bold;">تعداد<br>تولید</div></div>
<div class="c" style="left:596px;top:394px;width:61px;height:41px;background:#0a98cf;border:1px solid #84d3f2;border-bottom:0;"><div style="padding:3px 3px 0 3px;text-align:center;line-height:17px;font-size:12px;color:#ffffff;font-weight:bold;">تعداد<br>فروش</div></div>
<div class="c" style="left:514px;top:394px;width:83px;height:41px;background:#0a98cf;border:1px solid #84d3f2;border-bottom:0;"><div style="padding:3px 3px 0 3px;text-align:center;line-height:17px;font-size:12px;color:#ffffff;font-weight:bold;">نرخ فروش<br>(ریال)</div></div>
<div class="c" style="left:419px;top:394px;width:96px;height:41px;background:#0a98cf;border:1px solid #84d3f2;border-bottom:0;"><div style="padding:3px 3px 0 3px;text-align:center;line-height:17px;font-size:12px;color:#ffffff;font-weight:bold;">مبلغ فروش<br>(میلیون ریال)</div></div>
<div class="c" style="left:362px;top:394px;width:58px;height:41px;background:#0a98cf;border:1px solid #84d3f2;border-bottom:0;"><div style="padding:3px 3px 0 3px;text-align:center;line-height:17px;font-size:12px;color:#ffffff;font-weight:bold;">تعداد<br>تولید</div></div>
<div class="c" style="left:299px;top:394px;width:64px;height:41px;background:#0a98cf;border:1px solid #84d3f2;border-bottom:0;"><div style="padding:3px 3px 0 3px;text-align:center;line-height:17px;font-size:12px;color:#ffffff;font-weight:bold;">تعداد<br>فروش</div></div>
<div class="c" style="left:211px;top:394px;width:89px;height:41px;background:#0a98cf;border:1px solid #84d3f2;border-bottom:0;"><div style="padding:3px 3px 0 3px;text-align:center;line-height:17px;font-size:12px;color:#ffffff;font-weight:bold;">نرخ فروش<br>(ریال)</div></div>
<div class="c" style="left:115px;top:394px;width:97px;height:41px;background:#0a98cf;border:1px solid #84d3f2;border-bottom:0;"><div style="padding:3px 3px 0 3px;text-align:center;line-height:17px;font-size:12px;color:#ffffff;font-weight:bold;">مبلغ فروش<br>(میلیون ریال)</div></div>
<div class="c" style="left:1733px;top:903px;width:152px;height:47px;background:#0a98cf;border:1px solid #84d3f2;border-bottom:0;"><div style="padding:3px 3px 0 3px;text-align:center;line-height:17px;font-size:12px;color:#ffffff;font-weight:bold;">شرح</div></div>
<div class="c" style="left:1701px;top:903px;width:33px;height:47px;background:#0a98cf;border:1px solid #84d3f2;border-bottom:0;"><div style="padding:3px 3px 0 3px;text-align:center;line-height:17px;font-size:12px;color:#ffffff;font-weight:bold;">واحد</div></div>
<div class="c" style="left:1466px;top:903px;width:236px;height:24px;background:#0a98cf;border:1px solid #84d3f2;"><div style="padding:3px 3px 0 3px;text-align:center;line-height:17px;font-size:12px;color:#ffffff;font-weight:bold;">از ابتدای سال مالی تا تاریخ <span class="n">۱۴<i class="z"></i>۴/<i class="z"></i>۷/۳<i class="z"></i></span></div></div>
<div class="c" style="left:1663px;top:926px;width:39px;height:24px;background:#0a98cf;border:1px solid #84d3f2;border-bottom:0;"><div style="padding:3px 3px 0 3px;text-align:center;line-height:17px;font-size:12px;color:#ffffff;font-weight:bold;">مقدار</div></div>
<div class="c" style="left:1577px;top:926px;width:87px;height:24px;background:#0a98cf;border:1px solid #84d3f2;border-bottom:0;"><div style="padding:3px 3px 0 3px;text-align:center;line-height:17px;font-size:12px;color:#ffffff;font-weight:bold;">نرخ (ریال)</div></div>
<div class="c" style="left:1466px;top:926px;width:112px;height:24px;background:#0a98cf;border:1px solid #84d3f2;border-bottom:0;"><div style="padding:3px 3px 0 3px;text-align:center;line-height:17px;font-size:12px;color:#ffffff;font-weight:bold;">مبلغ (میلیون ریال)</div></div>
<div class="c" style="left:1250px;top:903px;width:217px;height:24px;background:#0a98cf;border:1px solid #84d3f2;"><div style="padding:3px 3px 0 3px;text-align:center;line-height:17px;font-size:12px;color:#ffffff;font-weight:bold;">اصلاحات</div></div>
<div class="c" style="left:1429px;top:926px;width:38px;height:24px;background:#0a98cf;border:1px solid #84d3f2;border-bottom:0;"><div style="padding:3px 3px 0 3px;text-align:center;line-height:17px;font-size:12px;color:#ffffff;font-weight:bold;">مقدار</div></div>
<div class="c" style="left:1365px;top:926px;width:65px;height:24px;background:#0a98cf;border:1px solid #84d3f2;border-bottom:0;"><div style="padding:3px 3px 0 3px;text-align:center;line-height:17px;font-size:12px;color:#ffffff;font-weight:bold;">نرخ (ریال)</div></div>
<div class="c" style="left:1250px;top:926px;width:116px;height:24px;background:#0a98cf;border:1px solid #84d3f2;border-bottom:0;"><div style="padding:3px 3px 0 3px;text-align:center;line-height:17px;font-size:12px;color:#ffffff;font-weight:bold;">مبلغ ( میلیون ریال)</div></div>
<div class="c" style="left:946px;top:903px;width:305px;height:24px;background:#0a98cf;border:1px solid #84d3f2;"><div style="padding:3px 3px 0 3px;text-align:center;line-height:17px;font-size:12px;color:#ffffff;font-weight:bold;">ازابتدای سال مالی تا تاریخ <span class="n">۱۴<i class="z"></i>۴/<i class="z"></i>۷/۳<i class="z"></i></span> (اصلاح شده)</div></div>
<div class="c" style="left:1201px;top:926px;width:50px;height:24px;background:#0a98cf;border:1px solid #84d3f2;border-bottom:0;"><div style="padding:3px 3px 0 3px;text-align:center;line-height:17px;font-size:12px;color:#ffffff;font-weight:bold;">مقدار</div></div>
<div class="c" style="left:1090px;top:926px;width:112px;height:24px;background:#0a98cf;border:1px solid #84d3f2;border-bottom:0;"><div style="padding:3px 3px 0 3px;text-align:center;line-height:17px;font-size:12px;color:#ffffff;font-weight:bold;">نرخ (ریال)</div></div>
<div class="c" style="left:946px;top:926px;width:145px;height:24px;background:#0a98cf;border:1px solid #84d3f2;border-bottom:0;"><div style="padding:3px 3px 0 3px;text-align:center;line-height:17px;font-size:12px;color:#ffffff;font-weight:bold;">مبلغ (میلیون ریال)</div></div>
<div class="c" style="left:700px;top:903px;width:247px;height:24px;background:#0a98cf;border:1px solid #84d3f2;"><div style="padding:3px 3px 0 3px;text-align:center;line-height:17px;font-size:12px;color:#ffffff;font-weight:bold;">خرید دوره یک ماهه منتهی به <span class="n">۱۴<i class="z"></i>۴/<i class="z"></i>۸/۳<i class="z"></i></span></div></div>
<div class="c" style="left:907px;top:926px;width:40px;height:24px;background:#0a98cf;border:1px solid #84d3f2;border-bottom:0;"><div style="padding:3px 3px 0 3px;text-align:center;line-height:17px;font-size:12px;color:#ffffff;font-weight:bold;">مقدار</div></div>
<div class="c" style="left:815px;top:926px;width:93px;height:24px;background:#0a98cf;border:1px solid #84d3f2;border-bottom:0;"><div style="padding:3px 3px 0 3px;text-align:center;line-height:17px;font-size:12px;color:#ffffff;font-weight:bold;">نرخ (ریال)</div></div>
<div class="c" style="left:700px;top:926px;width:116px;height:24px;background:#0a98cf;border:1px solid #84d3f2;border-bottom:0;"><div style="padding:3px 3px 0 3px;text-align:center;line-height:17px;font-size:12px;color:#ffffff;font-weight:bold;">مبلغ (میلیون ریال)</div></div>
<div class="c" style="left:279px;top:903px;width:422px;height:24px;background:#0a98cf;border:1px solid #84d3f2;"><div style="padding:3px 3px 0 3px;text-align:center;line-height:17px;font-size:12px;color:#ffffff;font-weight:bold;">مواد اولیه خریداری شده از ابتدای دوره تا پایان دوره منتهی به <span class="n">۱۴<i class="z"></i>۴/<i class="z"></i>۸/۳<i class="z"></i></span></div></div>
<div class="c" style="left:634px;top:926px;width:67px;height:24px;background:#0a98cf;border:1px solid #84d3f2;border-bottom:0;"><div style="padding:3px 3px 0 3px;text-align:center;line-height:17px;font-size:12px;color:#ffffff;font-weight:bold;">مقدار</div></div>
<div class="c" style="left:477px;top:926px;width:158px;height:24px;background:#0a98cf;border:1px solid #84d3f2;border-bottom:0;"><div style="padding:3px 3px 0 3px;text-align:center;line-height:17px;font-size:12px;color:#ffffff;font-weight:bold;">نرخ (ریال)</div></div>
<div class="c" style="left:279px;top:926px;width:199px;height:24px;background:#0a98cf;border:1px solid #84d3f2;border-bottom:0;"><div style="padding:3px 3px 0 3px;text-align:center;line-height:17px;font-size:12px;color:#ffffff;font-weight:bold;">مبلغ (میلیون ریال)</div></div>
<div class="c" style="left:35px;top:903px;width:245px;height:24px;background:#0a98cf;border:1px solid #84d3f2;"><div style="padding:3px 3px 0 3px;text-align:center;line-height:17px;font-size:12px;color:#ffffff;font-weight:bold;">از ابتدای سال مالی تا تاریخ <span class="n">۱۴<i class="z"></i>۳/<i class="z"></i>۸/۳<i class="z"></i></span></div></div>
<div class="c" style="left:236px;top:926px;width:44px;height:24px;background:#0a98cf;border:1px solid #84d3f2;border-bottom:0;"><div style="padding:3px 3px 0 3px;text-align:center;line-height:17px;font-size:12px;color:#ffffff;font-weight:bold;">مقدار</div></div>
<div class="c" style="left:147px;top:926px;width:90px;height:24px;background:#0a98cf;border:1px solid #84d3f2;border-bottom:0;"><div style="padding:3px 3px 0 3px;text-align:center;line-height:17px;font-size:12px;color:#ffffff;font-weight:bold;">نرخ (ریال)</div></div>
<div class="c" style="left:35px;top:926px;width:113px;height:24px;background:#0a98cf;border:1px solid #84d3f2;border-bottom:0;"><div style="padding:3px 3px 0 3px;text-align:center;line-height:17px;font-size:12px;color:#ffffff;font-weight:bold;">مبلغ (میلیون ریال)</div></div>
<div class="a" style="left:35px;top:370px;width:1850px;height:1px;background:#2a86aa"></div>
<div class="a" style="left:35px;top:371px;width:1px;height:64px;background:#0a98cf"></div>
<div class="a" style="left:1884px;top:371px;width:1px;height:64px;background:#0a98cf"></div>
<div class="a" style="left:35px;top:903px;width:1850px;height:1px;background:#2a86aa"></div>
<div class="a" style="left:35px;top:904px;width:1px;height:46px;background:#0a98cf"></div>
<div class="a" style="left:1884px;top:904px;width:1px;height:46px;background:#0a98cf"></div></body></html>
